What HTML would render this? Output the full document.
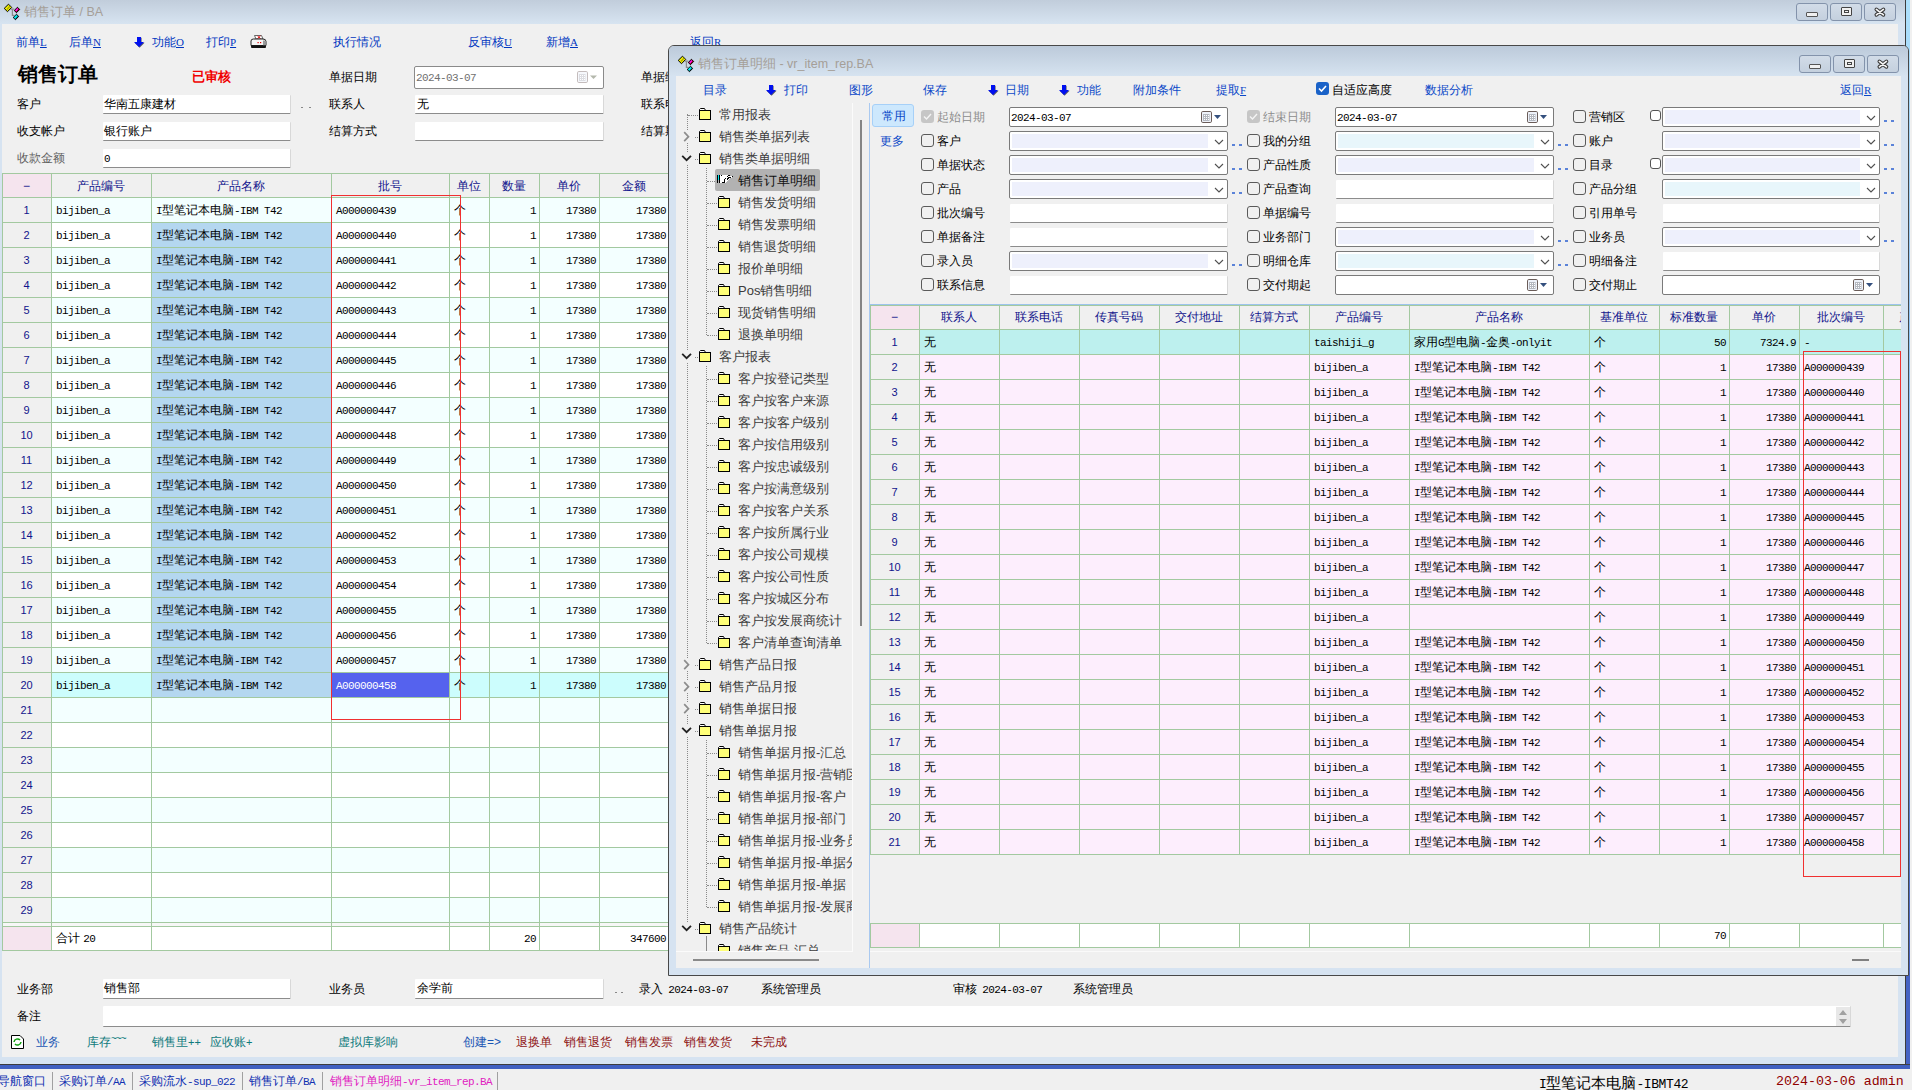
<!DOCTYPE html>
<html><head><meta charset="utf-8"><style>
*{margin:0;padding:0;box-sizing:border-box}
html,body{width:1912px;height:1090px;overflow:hidden;background:#f0f0f0;position:relative;font-family:"Liberation Sans",sans-serif;font-size:12px;color:#000}
div{position:absolute}
.t{white-space:nowrap;line-height:16px;font-size:12px}
.m{font-family:"Liberation Mono",monospace;font-size:11px;letter-spacing:-0.6px}
.lk{color:#0036c0}
.inp{background:#fff;border-bottom:1px solid #8c8c8c;border-right:1px solid #d8d8d8;border-radius:1px}
.btn{border:1px solid #8393ab;border-radius:3px;background:linear-gradient(#d2dce8,#c4d0de)}
.cb{width:13px;height:13px;border:1px solid #5a5a5a;border-radius:3px;background:transparent}
.cmb{background:#fff;border:1px solid #7a7a7a;border-radius:2px}
</style></head><body>
<div style="left:1906px;top:0px;width:4px;height:1069px;background:linear-gradient(#ade0fb,#80b8f8 45%,#4563c4 90%)"></div>
<div style="left:0px;top:1064px;width:1910px;height:5px;background:#4060c0;border-top:1px solid #404040"></div>
<div style="left:0px;top:0px;width:1906px;height:1065px;background:#d6e3f1;border-right:1px solid #3c3c3c;border-bottom:1px solid #3c3c3c"></div>
<div style="left:0px;top:0px;width:1905px;height:24px;background:linear-gradient(#c1cddb,#d7e4f1)"></div>
<svg style="position:absolute;left:0px;top:0px" width="22" height="22" viewBox="0 0 22 22"><path d="M10.8 9.2 H14.3 M12.4 9.2 V15.4 H14.3" stroke="#8c8c8c" stroke-width="1.2" fill="none"/><path d="M8.5 4.2 L11.7 7.4 L7.5 11.7 L4.2 8.4 Z" fill="#f0f000" stroke="#000" stroke-width="1"/><path d="M9.8 5.6 L10.5 6.6 L7.2 10 L6.4 9.2 Z" fill="#a8a000"/><path d="M17.5 7.3 L19.7 9.5 L16.4 12.7 L14.3 10.4 Z" fill="#a00010" stroke="#000" stroke-width="1"/><path d="M17.3 8 L15.2 10.4 L16.2 11.4 L18.4 9 Z" fill="#ff10ff"/><path d="M16.5 14.3 L18.7 16.4 L15.5 19.7 L13.2 17.5 Z" fill="#008890" stroke="#000" stroke-width="1"/><path d="M16.3 15 L14 17.5 L15 18.4 L17.3 16 Z" fill="#00ffff"/></svg>
<div class="t" style="left:24px;top:4px;font-size:12.5px;color:#a59f98">销售订单 / BA</div>
<div class="btn" style="left:1796px;top:3px;width:32px;height:18px;"></div>
<div style="left:1806px;top:12px;width:12px;height:5px;background:#f0f0f0;border:1px solid #555;border-radius:1px"></div>
<div class="btn" style="left:1830px;top:3px;width:32px;height:18px;"></div>
<div style="left:1841px;top:7px;width:11px;height:9px;background:#f0f0f0;border:1px solid #444;border-radius:1px"><div style="left:2px;top:2px;width:5px;height:3px;border:1px solid #444"></div></div>
<div class="btn" style="left:1864px;top:3px;width:32px;height:18px;"></div>
<svg style="position:absolute;left:1873px;top:6px" width="14" height="12" viewBox="0 0 14 12"><path d="M3.4 3.4 L10.4 8.8 M10.4 3.4 L3.4 8.8" stroke="#3a3a3a" stroke-width="3.8" stroke-linecap="round"/><path d="M3.4 3.4 L10.4 8.8 M10.4 3.4 L3.4 8.8" stroke="#f6f6f6" stroke-width="1.7" stroke-linecap="round"/></svg>
<div style="left:2px;top:24px;width:1896px;height:1033px;background:#f0f0f0"></div>
<div class="t" style="left:16px;top:34px;color:#0036c0">前单<span style="font-family:'Liberation Serif',serif;font-size:11px;text-decoration:underline">L</span></div>
<div class="t" style="left:69px;top:34px;color:#0036c0">后单<span style="font-family:'Liberation Serif',serif;font-size:11px;text-decoration:underline">N</span></div>
<div class="t" style="left:152px;top:34px;color:#0036c0">功能<span style="font-family:'Liberation Serif',serif;font-size:11px;text-decoration:underline">O</span></div>
<div class="t" style="left:206px;top:34px;color:#0036c0">打印<span style="font-family:'Liberation Serif',serif;font-size:11px;text-decoration:underline">P</span></div>
<div class="t" style="left:333px;top:34px;color:#0036c0">执行情况</div>
<div class="t" style="left:468px;top:34px;color:#0036c0">反审核<span style="font-family:'Liberation Serif',serif;font-size:11px;text-decoration:underline">U</span></div>
<div class="t" style="left:546px;top:34px;color:#0036c0">新增<span style="font-family:'Liberation Serif',serif;font-size:11px;text-decoration:underline">A</span></div>
<div class="t" style="left:690px;top:34px;color:#0036c0">返回<span style="font-family:'Liberation Serif',serif;font-size:11px;text-decoration:underline">R</span></div>
<svg style="position:absolute;left:133px;top:36px" width="12" height="12" viewBox="0 0 12 12"><path d="M4 1 H8 V6 H11 L6 11 L1 6 H4 Z" fill="#606060" transform="translate(0.6,0.8)"/><path d="M4 1 H8 V6 H11 L6 11 L1 6 H4 Z" fill="#0010f0"/></svg>
<svg style="position:absolute;left:250px;top:35px" width="17" height="14" viewBox="0 0 17 14"><path d="M4.5 0.5 H11.5 L13 4 H6 Z" fill="#fff" stroke="#444" stroke-width="0.8"/><path d="M7.5 1 L10.5 3.5 M10.5 1 L7.5 3.5" stroke="#e00000" stroke-width="0.9"/><path d="M1 6 Q1 4 3.5 4 H13 Q16 4 16 6.5 V10.5 H1 Z" fill="#f6f6f6" stroke="#222" stroke-width="1"/><rect x="13" y="5.5" width="2.5" height="5" fill="#9a9a9a"/><rect x="7.5" y="7" width="1.2" height="1.2" fill="#e00000"/><rect x="10" y="7" width="1.2" height="1.2" fill="#e00000"/><rect x="1" y="10.5" width="15" height="2.5" rx="1" fill="#111"/></svg>
<div class="t" style="left:18px;top:67px;font-family:'Liberation Serif',serif;font-size:20px;font-weight:bold;line-height:16px;top:66px">销售订单</div>
<div class="t" style="left:192px;top:69px;color:#f00000;font-weight:bold;font-size:13px">已审核</div>
<div class="t" style="left:329px;top:69px;">单据日期</div>
<div style="left:414px;top:66px;width:190px;height:23px;background:#fff;border:1px solid #8a8a8a;border-radius:2px"></div>
<div class="t" style="left:416px;top:69px;color:#707070"><span class=m>2024-03-07</span></div>
<svg style="position:absolute;left:577px;top:71px" width="24" height="13" viewBox="0 0 24 13"><rect x="0.5" y="0.5" width="10" height="11" rx="1.3" fill="#f6f8fc" stroke="#c4bcbc"/><rect x="2" y="3" width="6.5" height="7" fill="#dcdde2"/><path d="M3 4h1v1h-1zM5 4h1v1h-1zM7 4h1v1h-1zM3 6h1v1h-1zM5 6h1v1h-1zM7 6h1v1h-1zM3 8h1v1h-1zM5 8h1v1h-1zM7 8h1v1h-1z" fill="#fff"/><path d="M13 4.5 L20 4.5 L16.5 8 Z" fill="#b4b8ac"/></svg>
<div class="t" style="left:641px;top:69px;">单据编</div>
<div class="t" style="left:17px;top:96px;">客户</div>
<div class="inp" style="left:103px;top:95px;width:188px;height:19px;"></div>
<div class="t" style="left:104px;top:96px;">华南五康建材</div>
<div style="left:301px;top:107px;width:2px;height:1px;background:#888"></div>
<div style="left:309px;top:107px;width:2px;height:1px;background:#888"></div>
<div class="t" style="left:329px;top:96px;">联系人</div>
<div class="inp" style="left:415px;top:95px;width:189px;height:19px;"></div>
<div class="t" style="left:417px;top:96px;">无</div>
<div class="t" style="left:641px;top:96px;">联系电</div>
<div class="t" style="left:17px;top:123px;">收支帐户</div>
<div class="inp" style="left:103px;top:122px;width:188px;height:19px;"></div>
<div class="t" style="left:104px;top:123px;">银行账户</div>
<div class="t" style="left:329px;top:123px;">结算方式</div>
<div class="inp" style="left:415px;top:122px;width:189px;height:19px;"></div>
<div class="t" style="left:641px;top:123px;">结算期</div>
<div class="t" style="left:17px;top:150px;color:#606060">收款金额</div>
<div class="inp" style="left:103px;top:149px;width:188px;height:19px;"></div>
<div class="t" style="left:104px;top:150px;"><span class=m>0</span></div>
<div style="left:2px;top:173px;width:698px;height:24px;background:#f0f0f0"></div>
<div style="left:2px;top:173px;width:49px;height:24px;background:#f5e4ee"></div>
<div style="left:2px;top:198px;width:698px;height:24px;background:#f3ffff"></div>
<div style="left:2px;top:198px;width:49px;height:24px;background:#f0f0f0"></div>
<div style="left:2px;top:223px;width:698px;height:24px;background:#ffffff"></div>
<div style="left:2px;top:223px;width:49px;height:24px;background:#f0f0f0"></div>
<div style="left:152px;top:223px;width:179px;height:24px;background:#b4d7f0"></div>
<div style="left:2px;top:248px;width:698px;height:24px;background:#f3ffff"></div>
<div style="left:2px;top:248px;width:49px;height:24px;background:#f0f0f0"></div>
<div style="left:152px;top:248px;width:179px;height:24px;background:#b4d7f0"></div>
<div style="left:2px;top:273px;width:698px;height:24px;background:#ffffff"></div>
<div style="left:2px;top:273px;width:49px;height:24px;background:#f0f0f0"></div>
<div style="left:152px;top:273px;width:179px;height:24px;background:#b4d7f0"></div>
<div style="left:2px;top:298px;width:698px;height:24px;background:#f3ffff"></div>
<div style="left:2px;top:298px;width:49px;height:24px;background:#f0f0f0"></div>
<div style="left:152px;top:298px;width:179px;height:24px;background:#b4d7f0"></div>
<div style="left:2px;top:323px;width:698px;height:24px;background:#ffffff"></div>
<div style="left:2px;top:323px;width:49px;height:24px;background:#f0f0f0"></div>
<div style="left:152px;top:323px;width:179px;height:24px;background:#b4d7f0"></div>
<div style="left:2px;top:348px;width:698px;height:24px;background:#f3ffff"></div>
<div style="left:2px;top:348px;width:49px;height:24px;background:#f0f0f0"></div>
<div style="left:152px;top:348px;width:179px;height:24px;background:#b4d7f0"></div>
<div style="left:2px;top:373px;width:698px;height:24px;background:#ffffff"></div>
<div style="left:2px;top:373px;width:49px;height:24px;background:#f0f0f0"></div>
<div style="left:152px;top:373px;width:179px;height:24px;background:#b4d7f0"></div>
<div style="left:2px;top:398px;width:698px;height:24px;background:#f3ffff"></div>
<div style="left:2px;top:398px;width:49px;height:24px;background:#f0f0f0"></div>
<div style="left:152px;top:398px;width:179px;height:24px;background:#b4d7f0"></div>
<div style="left:2px;top:423px;width:698px;height:24px;background:#ffffff"></div>
<div style="left:2px;top:423px;width:49px;height:24px;background:#f0f0f0"></div>
<div style="left:152px;top:423px;width:179px;height:24px;background:#b4d7f0"></div>
<div style="left:2px;top:448px;width:698px;height:24px;background:#f3ffff"></div>
<div style="left:2px;top:448px;width:49px;height:24px;background:#f0f0f0"></div>
<div style="left:152px;top:448px;width:179px;height:24px;background:#b4d7f0"></div>
<div style="left:2px;top:473px;width:698px;height:24px;background:#ffffff"></div>
<div style="left:2px;top:473px;width:49px;height:24px;background:#f0f0f0"></div>
<div style="left:152px;top:473px;width:179px;height:24px;background:#b4d7f0"></div>
<div style="left:2px;top:498px;width:698px;height:24px;background:#f3ffff"></div>
<div style="left:2px;top:498px;width:49px;height:24px;background:#f0f0f0"></div>
<div style="left:152px;top:498px;width:179px;height:24px;background:#b4d7f0"></div>
<div style="left:2px;top:523px;width:698px;height:24px;background:#ffffff"></div>
<div style="left:2px;top:523px;width:49px;height:24px;background:#f0f0f0"></div>
<div style="left:152px;top:523px;width:179px;height:24px;background:#b4d7f0"></div>
<div style="left:2px;top:548px;width:698px;height:24px;background:#f3ffff"></div>
<div style="left:2px;top:548px;width:49px;height:24px;background:#f0f0f0"></div>
<div style="left:152px;top:548px;width:179px;height:24px;background:#b4d7f0"></div>
<div style="left:2px;top:573px;width:698px;height:24px;background:#ffffff"></div>
<div style="left:2px;top:573px;width:49px;height:24px;background:#f0f0f0"></div>
<div style="left:152px;top:573px;width:179px;height:24px;background:#b4d7f0"></div>
<div style="left:2px;top:598px;width:698px;height:24px;background:#f3ffff"></div>
<div style="left:2px;top:598px;width:49px;height:24px;background:#f0f0f0"></div>
<div style="left:152px;top:598px;width:179px;height:24px;background:#b4d7f0"></div>
<div style="left:2px;top:623px;width:698px;height:24px;background:#ffffff"></div>
<div style="left:2px;top:623px;width:49px;height:24px;background:#f0f0f0"></div>
<div style="left:152px;top:623px;width:179px;height:24px;background:#b4d7f0"></div>
<div style="left:2px;top:648px;width:698px;height:24px;background:#f3ffff"></div>
<div style="left:2px;top:648px;width:49px;height:24px;background:#f0f0f0"></div>
<div style="left:152px;top:648px;width:179px;height:24px;background:#b4d7f0"></div>
<div style="left:2px;top:673px;width:698px;height:24px;background:#ccfdfd"></div>
<div style="left:2px;top:673px;width:49px;height:24px;background:#f0f0f0"></div>
<div style="left:152px;top:673px;width:179px;height:24px;background:#b4d7f0"></div>
<div style="left:2px;top:698px;width:698px;height:24px;background:#f3ffff"></div>
<div style="left:2px;top:698px;width:49px;height:24px;background:#f0f0f0"></div>
<div style="left:2px;top:723px;width:698px;height:24px;background:#ffffff"></div>
<div style="left:2px;top:723px;width:49px;height:24px;background:#f0f0f0"></div>
<div style="left:2px;top:748px;width:698px;height:24px;background:#f3ffff"></div>
<div style="left:2px;top:748px;width:49px;height:24px;background:#f0f0f0"></div>
<div style="left:2px;top:773px;width:698px;height:24px;background:#ffffff"></div>
<div style="left:2px;top:773px;width:49px;height:24px;background:#f0f0f0"></div>
<div style="left:2px;top:798px;width:698px;height:24px;background:#f3ffff"></div>
<div style="left:2px;top:798px;width:49px;height:24px;background:#f0f0f0"></div>
<div style="left:2px;top:823px;width:698px;height:24px;background:#ffffff"></div>
<div style="left:2px;top:823px;width:49px;height:24px;background:#f0f0f0"></div>
<div style="left:2px;top:848px;width:698px;height:24px;background:#f3ffff"></div>
<div style="left:2px;top:848px;width:49px;height:24px;background:#f0f0f0"></div>
<div style="left:2px;top:873px;width:698px;height:24px;background:#ffffff"></div>
<div style="left:2px;top:873px;width:49px;height:24px;background:#f0f0f0"></div>
<div style="left:2px;top:898px;width:698px;height:24px;background:#f3ffff"></div>
<div style="left:2px;top:898px;width:49px;height:24px;background:#f0f0f0"></div>
<div style="left:332px;top:673px;width:117px;height:24px;background:#5562ee"></div>
<div style="left:2px;top:923px;width:698px;height:3px;background:#f7f7f7"></div>
<div style="left:2px;top:927px;width:698px;height:23px;background:#fff"></div>
<div style="left:2px;top:927px;width:49px;height:23px;background:#f5e4ee"></div>
<div style="left:2px;top:173px;width:698px;height:1px;background:#a3c9a0"></div>
<div style="left:2px;top:197px;width:698px;height:1px;background:#a3c9a0"></div>
<div style="left:2px;top:222px;width:698px;height:1px;background:#a3c9a0"></div>
<div style="left:2px;top:247px;width:698px;height:1px;background:#a3c9a0"></div>
<div style="left:2px;top:272px;width:698px;height:1px;background:#a3c9a0"></div>
<div style="left:2px;top:297px;width:698px;height:1px;background:#a3c9a0"></div>
<div style="left:2px;top:322px;width:698px;height:1px;background:#a3c9a0"></div>
<div style="left:2px;top:347px;width:698px;height:1px;background:#a3c9a0"></div>
<div style="left:2px;top:372px;width:698px;height:1px;background:#a3c9a0"></div>
<div style="left:2px;top:397px;width:698px;height:1px;background:#a3c9a0"></div>
<div style="left:2px;top:422px;width:698px;height:1px;background:#a3c9a0"></div>
<div style="left:2px;top:447px;width:698px;height:1px;background:#a3c9a0"></div>
<div style="left:2px;top:472px;width:698px;height:1px;background:#a3c9a0"></div>
<div style="left:2px;top:497px;width:698px;height:1px;background:#a3c9a0"></div>
<div style="left:2px;top:522px;width:698px;height:1px;background:#a3c9a0"></div>
<div style="left:2px;top:547px;width:698px;height:1px;background:#a3c9a0"></div>
<div style="left:2px;top:572px;width:698px;height:1px;background:#a3c9a0"></div>
<div style="left:2px;top:597px;width:698px;height:1px;background:#a3c9a0"></div>
<div style="left:2px;top:622px;width:698px;height:1px;background:#a3c9a0"></div>
<div style="left:2px;top:647px;width:698px;height:1px;background:#a3c9a0"></div>
<div style="left:2px;top:672px;width:698px;height:1px;background:#a3c9a0"></div>
<div style="left:2px;top:697px;width:698px;height:1px;background:#a3c9a0"></div>
<div style="left:2px;top:722px;width:698px;height:1px;background:#a3c9a0"></div>
<div style="left:2px;top:747px;width:698px;height:1px;background:#a3c9a0"></div>
<div style="left:2px;top:772px;width:698px;height:1px;background:#a3c9a0"></div>
<div style="left:2px;top:797px;width:698px;height:1px;background:#a3c9a0"></div>
<div style="left:2px;top:822px;width:698px;height:1px;background:#a3c9a0"></div>
<div style="left:2px;top:847px;width:698px;height:1px;background:#a3c9a0"></div>
<div style="left:2px;top:872px;width:698px;height:1px;background:#a3c9a0"></div>
<div style="left:2px;top:897px;width:698px;height:1px;background:#a3c9a0"></div>
<div style="left:2px;top:922px;width:698px;height:1px;background:#a3c9a0"></div>
<div style="left:2px;top:926px;width:698px;height:1px;background:#a3c9a0"></div>
<div style="left:2px;top:950px;width:698px;height:1px;background:#a3c9a0"></div>
<div style="left:2px;top:173px;width:1px;height:778px;background:#a3c9a0"></div>
<div style="left:51px;top:173px;width:1px;height:778px;background:#a3c9a0"></div>
<div style="left:151px;top:173px;width:1px;height:778px;background:#a3c9a0"></div>
<div style="left:331px;top:173px;width:1px;height:778px;background:#a3c9a0"></div>
<div style="left:449px;top:173px;width:1px;height:778px;background:#a3c9a0"></div>
<div style="left:489px;top:173px;width:1px;height:778px;background:#a3c9a0"></div>
<div style="left:539px;top:173px;width:1px;height:778px;background:#a3c9a0"></div>
<div style="left:599px;top:173px;width:1px;height:778px;background:#a3c9a0"></div>
<div class="t" style="left:2px;width:49px;text-align:center;top:178px;color:#10148c">−</div>
<div class="t" style="left:51px;width:100px;text-align:center;top:178px;color:#10148c">产品编号</div>
<div class="t" style="left:151px;width:180px;text-align:center;top:178px;color:#10148c">产品名称</div>
<div class="t" style="left:331px;width:118px;text-align:center;top:178px;color:#10148c">批号</div>
<div class="t" style="left:449px;width:40px;text-align:center;top:178px;color:#10148c">单位</div>
<div class="t" style="left:489px;width:50px;text-align:center;top:178px;color:#10148c">数量</div>
<div class="t" style="left:539px;width:60px;text-align:center;top:178px;color:#10148c">单价</div>
<div class="t" style="left:599px;width:69px;text-align:center;top:178px;color:#10148c">金额</div>
<div class="t" style="left:599px;width:69px;text-align:center;top:178px;color:#10148c;display:none">金额</div>
<div class="t" style="left:2px;width:49px;text-align:center;top:202px;color:#10148c;font-size:11px">1</div>
<div class="t" style="left:56px;top:202px;"><span class=m>bijiben_a</span></div>
<div class="t" style="left:156px;top:202px;"><span class=m>I</span>型笔记本电脑<span class=m>-IBM&nbsp;T42</span></div>
<div class="t" style="left:336px;top:202px;color:#000"><span class=m>A000000439</span></div>
<div class="t" style="left:454px;top:202px;">个</div>
<div class="t" style="right:1376px;top:202px;"><span class=m>1</span></div>
<div class="t" style="right:1316px;top:202px;"><span class=m>17380</span></div>
<div class="t" style="right:1246px;top:202px;"><span class=m>17380</span></div>
<div class="t" style="left:2px;width:49px;text-align:center;top:227px;color:#10148c;font-size:11px">2</div>
<div class="t" style="left:56px;top:227px;"><span class=m>bijiben_a</span></div>
<div class="t" style="left:156px;top:227px;"><span class=m>I</span>型笔记本电脑<span class=m>-IBM&nbsp;T42</span></div>
<div class="t" style="left:336px;top:227px;color:#000"><span class=m>A000000440</span></div>
<div class="t" style="left:454px;top:227px;">个</div>
<div class="t" style="right:1376px;top:227px;"><span class=m>1</span></div>
<div class="t" style="right:1316px;top:227px;"><span class=m>17380</span></div>
<div class="t" style="right:1246px;top:227px;"><span class=m>17380</span></div>
<div class="t" style="left:2px;width:49px;text-align:center;top:252px;color:#10148c;font-size:11px">3</div>
<div class="t" style="left:56px;top:252px;"><span class=m>bijiben_a</span></div>
<div class="t" style="left:156px;top:252px;"><span class=m>I</span>型笔记本电脑<span class=m>-IBM&nbsp;T42</span></div>
<div class="t" style="left:336px;top:252px;color:#000"><span class=m>A000000441</span></div>
<div class="t" style="left:454px;top:252px;">个</div>
<div class="t" style="right:1376px;top:252px;"><span class=m>1</span></div>
<div class="t" style="right:1316px;top:252px;"><span class=m>17380</span></div>
<div class="t" style="right:1246px;top:252px;"><span class=m>17380</span></div>
<div class="t" style="left:2px;width:49px;text-align:center;top:277px;color:#10148c;font-size:11px">4</div>
<div class="t" style="left:56px;top:277px;"><span class=m>bijiben_a</span></div>
<div class="t" style="left:156px;top:277px;"><span class=m>I</span>型笔记本电脑<span class=m>-IBM&nbsp;T42</span></div>
<div class="t" style="left:336px;top:277px;color:#000"><span class=m>A000000442</span></div>
<div class="t" style="left:454px;top:277px;">个</div>
<div class="t" style="right:1376px;top:277px;"><span class=m>1</span></div>
<div class="t" style="right:1316px;top:277px;"><span class=m>17380</span></div>
<div class="t" style="right:1246px;top:277px;"><span class=m>17380</span></div>
<div class="t" style="left:2px;width:49px;text-align:center;top:302px;color:#10148c;font-size:11px">5</div>
<div class="t" style="left:56px;top:302px;"><span class=m>bijiben_a</span></div>
<div class="t" style="left:156px;top:302px;"><span class=m>I</span>型笔记本电脑<span class=m>-IBM&nbsp;T42</span></div>
<div class="t" style="left:336px;top:302px;color:#000"><span class=m>A000000443</span></div>
<div class="t" style="left:454px;top:302px;">个</div>
<div class="t" style="right:1376px;top:302px;"><span class=m>1</span></div>
<div class="t" style="right:1316px;top:302px;"><span class=m>17380</span></div>
<div class="t" style="right:1246px;top:302px;"><span class=m>17380</span></div>
<div class="t" style="left:2px;width:49px;text-align:center;top:327px;color:#10148c;font-size:11px">6</div>
<div class="t" style="left:56px;top:327px;"><span class=m>bijiben_a</span></div>
<div class="t" style="left:156px;top:327px;"><span class=m>I</span>型笔记本电脑<span class=m>-IBM&nbsp;T42</span></div>
<div class="t" style="left:336px;top:327px;color:#000"><span class=m>A000000444</span></div>
<div class="t" style="left:454px;top:327px;">个</div>
<div class="t" style="right:1376px;top:327px;"><span class=m>1</span></div>
<div class="t" style="right:1316px;top:327px;"><span class=m>17380</span></div>
<div class="t" style="right:1246px;top:327px;"><span class=m>17380</span></div>
<div class="t" style="left:2px;width:49px;text-align:center;top:352px;color:#10148c;font-size:11px">7</div>
<div class="t" style="left:56px;top:352px;"><span class=m>bijiben_a</span></div>
<div class="t" style="left:156px;top:352px;"><span class=m>I</span>型笔记本电脑<span class=m>-IBM&nbsp;T42</span></div>
<div class="t" style="left:336px;top:352px;color:#000"><span class=m>A000000445</span></div>
<div class="t" style="left:454px;top:352px;">个</div>
<div class="t" style="right:1376px;top:352px;"><span class=m>1</span></div>
<div class="t" style="right:1316px;top:352px;"><span class=m>17380</span></div>
<div class="t" style="right:1246px;top:352px;"><span class=m>17380</span></div>
<div class="t" style="left:2px;width:49px;text-align:center;top:377px;color:#10148c;font-size:11px">8</div>
<div class="t" style="left:56px;top:377px;"><span class=m>bijiben_a</span></div>
<div class="t" style="left:156px;top:377px;"><span class=m>I</span>型笔记本电脑<span class=m>-IBM&nbsp;T42</span></div>
<div class="t" style="left:336px;top:377px;color:#000"><span class=m>A000000446</span></div>
<div class="t" style="left:454px;top:377px;">个</div>
<div class="t" style="right:1376px;top:377px;"><span class=m>1</span></div>
<div class="t" style="right:1316px;top:377px;"><span class=m>17380</span></div>
<div class="t" style="right:1246px;top:377px;"><span class=m>17380</span></div>
<div class="t" style="left:2px;width:49px;text-align:center;top:402px;color:#10148c;font-size:11px">9</div>
<div class="t" style="left:56px;top:402px;"><span class=m>bijiben_a</span></div>
<div class="t" style="left:156px;top:402px;"><span class=m>I</span>型笔记本电脑<span class=m>-IBM&nbsp;T42</span></div>
<div class="t" style="left:336px;top:402px;color:#000"><span class=m>A000000447</span></div>
<div class="t" style="left:454px;top:402px;">个</div>
<div class="t" style="right:1376px;top:402px;"><span class=m>1</span></div>
<div class="t" style="right:1316px;top:402px;"><span class=m>17380</span></div>
<div class="t" style="right:1246px;top:402px;"><span class=m>17380</span></div>
<div class="t" style="left:2px;width:49px;text-align:center;top:427px;color:#10148c;font-size:11px">10</div>
<div class="t" style="left:56px;top:427px;"><span class=m>bijiben_a</span></div>
<div class="t" style="left:156px;top:427px;"><span class=m>I</span>型笔记本电脑<span class=m>-IBM&nbsp;T42</span></div>
<div class="t" style="left:336px;top:427px;color:#000"><span class=m>A000000448</span></div>
<div class="t" style="left:454px;top:427px;">个</div>
<div class="t" style="right:1376px;top:427px;"><span class=m>1</span></div>
<div class="t" style="right:1316px;top:427px;"><span class=m>17380</span></div>
<div class="t" style="right:1246px;top:427px;"><span class=m>17380</span></div>
<div class="t" style="left:2px;width:49px;text-align:center;top:452px;color:#10148c;font-size:11px">11</div>
<div class="t" style="left:56px;top:452px;"><span class=m>bijiben_a</span></div>
<div class="t" style="left:156px;top:452px;"><span class=m>I</span>型笔记本电脑<span class=m>-IBM&nbsp;T42</span></div>
<div class="t" style="left:336px;top:452px;color:#000"><span class=m>A000000449</span></div>
<div class="t" style="left:454px;top:452px;">个</div>
<div class="t" style="right:1376px;top:452px;"><span class=m>1</span></div>
<div class="t" style="right:1316px;top:452px;"><span class=m>17380</span></div>
<div class="t" style="right:1246px;top:452px;"><span class=m>17380</span></div>
<div class="t" style="left:2px;width:49px;text-align:center;top:477px;color:#10148c;font-size:11px">12</div>
<div class="t" style="left:56px;top:477px;"><span class=m>bijiben_a</span></div>
<div class="t" style="left:156px;top:477px;"><span class=m>I</span>型笔记本电脑<span class=m>-IBM&nbsp;T42</span></div>
<div class="t" style="left:336px;top:477px;color:#000"><span class=m>A000000450</span></div>
<div class="t" style="left:454px;top:477px;">个</div>
<div class="t" style="right:1376px;top:477px;"><span class=m>1</span></div>
<div class="t" style="right:1316px;top:477px;"><span class=m>17380</span></div>
<div class="t" style="right:1246px;top:477px;"><span class=m>17380</span></div>
<div class="t" style="left:2px;width:49px;text-align:center;top:502px;color:#10148c;font-size:11px">13</div>
<div class="t" style="left:56px;top:502px;"><span class=m>bijiben_a</span></div>
<div class="t" style="left:156px;top:502px;"><span class=m>I</span>型笔记本电脑<span class=m>-IBM&nbsp;T42</span></div>
<div class="t" style="left:336px;top:502px;color:#000"><span class=m>A000000451</span></div>
<div class="t" style="left:454px;top:502px;">个</div>
<div class="t" style="right:1376px;top:502px;"><span class=m>1</span></div>
<div class="t" style="right:1316px;top:502px;"><span class=m>17380</span></div>
<div class="t" style="right:1246px;top:502px;"><span class=m>17380</span></div>
<div class="t" style="left:2px;width:49px;text-align:center;top:527px;color:#10148c;font-size:11px">14</div>
<div class="t" style="left:56px;top:527px;"><span class=m>bijiben_a</span></div>
<div class="t" style="left:156px;top:527px;"><span class=m>I</span>型笔记本电脑<span class=m>-IBM&nbsp;T42</span></div>
<div class="t" style="left:336px;top:527px;color:#000"><span class=m>A000000452</span></div>
<div class="t" style="left:454px;top:527px;">个</div>
<div class="t" style="right:1376px;top:527px;"><span class=m>1</span></div>
<div class="t" style="right:1316px;top:527px;"><span class=m>17380</span></div>
<div class="t" style="right:1246px;top:527px;"><span class=m>17380</span></div>
<div class="t" style="left:2px;width:49px;text-align:center;top:552px;color:#10148c;font-size:11px">15</div>
<div class="t" style="left:56px;top:552px;"><span class=m>bijiben_a</span></div>
<div class="t" style="left:156px;top:552px;"><span class=m>I</span>型笔记本电脑<span class=m>-IBM&nbsp;T42</span></div>
<div class="t" style="left:336px;top:552px;color:#000"><span class=m>A000000453</span></div>
<div class="t" style="left:454px;top:552px;">个</div>
<div class="t" style="right:1376px;top:552px;"><span class=m>1</span></div>
<div class="t" style="right:1316px;top:552px;"><span class=m>17380</span></div>
<div class="t" style="right:1246px;top:552px;"><span class=m>17380</span></div>
<div class="t" style="left:2px;width:49px;text-align:center;top:577px;color:#10148c;font-size:11px">16</div>
<div class="t" style="left:56px;top:577px;"><span class=m>bijiben_a</span></div>
<div class="t" style="left:156px;top:577px;"><span class=m>I</span>型笔记本电脑<span class=m>-IBM&nbsp;T42</span></div>
<div class="t" style="left:336px;top:577px;color:#000"><span class=m>A000000454</span></div>
<div class="t" style="left:454px;top:577px;">个</div>
<div class="t" style="right:1376px;top:577px;"><span class=m>1</span></div>
<div class="t" style="right:1316px;top:577px;"><span class=m>17380</span></div>
<div class="t" style="right:1246px;top:577px;"><span class=m>17380</span></div>
<div class="t" style="left:2px;width:49px;text-align:center;top:602px;color:#10148c;font-size:11px">17</div>
<div class="t" style="left:56px;top:602px;"><span class=m>bijiben_a</span></div>
<div class="t" style="left:156px;top:602px;"><span class=m>I</span>型笔记本电脑<span class=m>-IBM&nbsp;T42</span></div>
<div class="t" style="left:336px;top:602px;color:#000"><span class=m>A000000455</span></div>
<div class="t" style="left:454px;top:602px;">个</div>
<div class="t" style="right:1376px;top:602px;"><span class=m>1</span></div>
<div class="t" style="right:1316px;top:602px;"><span class=m>17380</span></div>
<div class="t" style="right:1246px;top:602px;"><span class=m>17380</span></div>
<div class="t" style="left:2px;width:49px;text-align:center;top:627px;color:#10148c;font-size:11px">18</div>
<div class="t" style="left:56px;top:627px;"><span class=m>bijiben_a</span></div>
<div class="t" style="left:156px;top:627px;"><span class=m>I</span>型笔记本电脑<span class=m>-IBM&nbsp;T42</span></div>
<div class="t" style="left:336px;top:627px;color:#000"><span class=m>A000000456</span></div>
<div class="t" style="left:454px;top:627px;">个</div>
<div class="t" style="right:1376px;top:627px;"><span class=m>1</span></div>
<div class="t" style="right:1316px;top:627px;"><span class=m>17380</span></div>
<div class="t" style="right:1246px;top:627px;"><span class=m>17380</span></div>
<div class="t" style="left:2px;width:49px;text-align:center;top:652px;color:#10148c;font-size:11px">19</div>
<div class="t" style="left:56px;top:652px;"><span class=m>bijiben_a</span></div>
<div class="t" style="left:156px;top:652px;"><span class=m>I</span>型笔记本电脑<span class=m>-IBM&nbsp;T42</span></div>
<div class="t" style="left:336px;top:652px;color:#000"><span class=m>A000000457</span></div>
<div class="t" style="left:454px;top:652px;">个</div>
<div class="t" style="right:1376px;top:652px;"><span class=m>1</span></div>
<div class="t" style="right:1316px;top:652px;"><span class=m>17380</span></div>
<div class="t" style="right:1246px;top:652px;"><span class=m>17380</span></div>
<div class="t" style="left:2px;width:49px;text-align:center;top:677px;color:#10148c;font-size:11px">20</div>
<div class="t" style="left:56px;top:677px;"><span class=m>bijiben_a</span></div>
<div class="t" style="left:156px;top:677px;"><span class=m>I</span>型笔记本电脑<span class=m>-IBM&nbsp;T42</span></div>
<div class="t" style="left:336px;top:677px;color:#fff"><span class=m>A000000458</span></div>
<div class="t" style="left:454px;top:677px;">个</div>
<div class="t" style="right:1376px;top:677px;"><span class=m>1</span></div>
<div class="t" style="right:1316px;top:677px;"><span class=m>17380</span></div>
<div class="t" style="right:1246px;top:677px;"><span class=m>17380</span></div>
<div class="t" style="left:2px;width:49px;text-align:center;top:702px;color:#10148c;font-size:11px">21</div>
<div class="t" style="left:2px;width:49px;text-align:center;top:727px;color:#10148c;font-size:11px">22</div>
<div class="t" style="left:2px;width:49px;text-align:center;top:752px;color:#10148c;font-size:11px">23</div>
<div class="t" style="left:2px;width:49px;text-align:center;top:777px;color:#10148c;font-size:11px">24</div>
<div class="t" style="left:2px;width:49px;text-align:center;top:802px;color:#10148c;font-size:11px">25</div>
<div class="t" style="left:2px;width:49px;text-align:center;top:827px;color:#10148c;font-size:11px">26</div>
<div class="t" style="left:2px;width:49px;text-align:center;top:852px;color:#10148c;font-size:11px">27</div>
<div class="t" style="left:2px;width:49px;text-align:center;top:877px;color:#10148c;font-size:11px">28</div>
<div class="t" style="left:2px;width:49px;text-align:center;top:902px;color:#10148c;font-size:11px">29</div>
<div class="t" style="left:56px;top:930px;">合计 <span class=m>20</span></div>
<div class="t" style="right:1376px;top:930px;"><span class=m>20</span></div>
<div class="t" style="right:1246px;top:930px;"><span class=m>347600</span></div>
<div style="left:331px;top:195px;width:130px;height:525px;border:1px solid #f03030"></div>
<div class="t" style="left:17px;top:981px;">业务部</div>
<div class="inp" style="left:103px;top:979px;width:188px;height:20px;"></div>
<div class="t" style="left:104px;top:980px;">销售部</div>
<div class="t" style="left:329px;top:981px;">业务员</div>
<div class="inp" style="left:415px;top:979px;width:189px;height:20px;"></div>
<div class="t" style="left:417px;top:980px;">余学前</div>
<div style="left:615px;top:992px;width:2px;height:1px;background:#888"></div>
<div style="left:621px;top:992px;width:2px;height:1px;background:#888"></div>
<div class="t" style="left:639px;top:981px;">录入 <span class=m style="margin-left:2px">2024-03-07</span></div>
<div class="t" style="left:761px;top:981px;">系统管理员</div>
<div class="t" style="left:953px;top:981px;">审核 <span class=m style="margin-left:2px">2024-03-07</span></div>
<div class="t" style="left:1073px;top:981px;">系统管理员</div>
<div class="t" style="left:17px;top:1008px;">备注</div>
<div class="inp" style="left:103px;top:1006px;width:1748px;height:21px;"></div>
<div style="left:1836px;top:1007px;width:14px;height:19px;background:#e8e8e8"></div>
<svg style="position:absolute;left:1838px;top:1009px" width="10" height="16" viewBox="0 0 10 16"><path d="M1 6 L5 1 L9 6 Z M1 10 L9 10 L5 15 Z" fill="#a0a0a0"/></svg>
<svg style="position:absolute;left:10px;top:1034px" width="15" height="16" viewBox="0 0 15 16"><path d="M1.5 1.5 H10 L13.5 5 V14.5 H1.5 Z" fill="#fff" stroke="#000"/><path d="M4 8 A3.5 3.5 0 0 1 10 6 M11 8 A3.5 3.5 0 0 1 5 10" stroke="#10a010" stroke-width="1.5" fill="none"/></svg>
<div class="t" style="left:36px;top:1034px;color:#1a56b4">业务</div>
<div class="t" style="left:87px;top:1034px;color:#0e7a7c">库存<span style="font-size:10px;position:relative;top:-4px;letter-spacing:-1px">~~~</span></div>
<div class="t" style="left:152px;top:1034px;color:#0e7a7c">销售里<span style="font-size:11px">++</span></div>
<div class="t" style="left:210px;top:1034px;color:#0e7a7c">应收账<span style="font-size:11px">+</span></div>
<div class="t" style="left:338px;top:1034px;color:#0e7a7c">虚拟库影响</div>
<div class="t" style="left:463px;top:1034px;color:#1a56b4">创建=&gt;</div>
<div class="t" style="left:516px;top:1034px;color:#8e1212">退换单</div>
<div class="t" style="left:564px;top:1034px;color:#8e1212">销售退货</div>
<div class="t" style="left:625px;top:1034px;color:#8e1212">销售发票</div>
<div class="t" style="left:684px;top:1034px;color:#8e1212">销售发货</div>
<div class="t" style="left:751px;top:1034px;color:#8e1212">未完成</div>
<div class="t" style="left:-2px;top:1073px;color:#1030b0">导航窗口</div>
<div class="t" style="left:59px;top:1073px;color:#1030b0">采购订单<span class=m>/AA</span></div>
<div class="t" style="left:139px;top:1073px;color:#1030b0">采购流水<span class=m>-sup_022</span></div>
<div class="t" style="left:249px;top:1073px;color:#1030b0">销售订单<span class=m>/BA</span></div>
<div class="t" style="left:330px;top:1073px;color:#e020c0">销售订单明细<span class=m>-vr_item_rep.BA</span></div>
<div style="left:52px;top:1072px;width:1px;height:18px;background:#a0a0a0"></div>
<div style="left:132px;top:1072px;width:1px;height:18px;background:#a0a0a0"></div>
<div style="left:242px;top:1072px;width:1px;height:18px;background:#a0a0a0"></div>
<div style="left:322px;top:1072px;width:1px;height:18px;background:#a0a0a0"></div>
<div style="left:497px;top:1072px;width:1px;height:18px;background:#a0a0a0"></div>
<div class="t" style="left:1539px;top:1075px;font-size:15px"><span class=m style="font-size:13px;letter-spacing:-0.4px">I</span>型笔记本电脑<span class=m style="font-size:13px;letter-spacing:-0.4px">-IBMT42</span></div>
<div class="t" style="left:1776px;top:1073px;color:#900000"><span class=m style="font-size:13.3px;letter-spacing:0">2024-03-06 admin</span></div>
<div style="left:668px;top:45px;width:1241px;height:931px;background:#d6e3f1;border:1px solid #484848;border-radius:6px 6px 0 0"></div>
<div style="left:669px;top:46px;width:1239px;height:30px;background:linear-gradient(#bccada,#d6e3f0);border-radius:5px 5px 0 0"></div>
<svg style="position:absolute;left:674px;top:52px" width="22" height="22" viewBox="0 0 22 22"><path d="M10.8 9.2 H14.3 M12.4 9.2 V15.4 H14.3" stroke="#8c8c8c" stroke-width="1.2" fill="none"/><path d="M8.5 4.2 L11.7 7.4 L7.5 11.7 L4.2 8.4 Z" fill="#f0f000" stroke="#000" stroke-width="1"/><path d="M9.8 5.6 L10.5 6.6 L7.2 10 L6.4 9.2 Z" fill="#a8a000"/><path d="M17.5 7.3 L19.7 9.5 L16.4 12.7 L14.3 10.4 Z" fill="#a00010" stroke="#000" stroke-width="1"/><path d="M17.3 8 L15.2 10.4 L16.2 11.4 L18.4 9 Z" fill="#ff10ff"/><path d="M16.5 14.3 L18.7 16.4 L15.5 19.7 L13.2 17.5 Z" fill="#008890" stroke="#000" stroke-width="1"/><path d="M16.3 15 L14 17.5 L15 18.4 L17.3 16 Z" fill="#00ffff"/></svg>
<div class="t" style="left:698px;top:56px;font-size:12.5px;color:#a59f98">销售订单明细 - vr_item_rep.BA</div>
<div class="btn" style="left:1799px;top:55px;width:32px;height:18px;"></div>
<div style="left:1809px;top:64px;width:12px;height:5px;background:#f0f0f0;border:1px solid #555;border-radius:1px"></div>
<div class="btn" style="left:1833px;top:55px;width:32px;height:18px;"></div>
<div style="left:1844px;top:59px;width:11px;height:9px;background:#f0f0f0;border:1px solid #444;border-radius:1px"><div style="left:2px;top:2px;width:5px;height:3px;border:1px solid #444"></div></div>
<div class="btn" style="left:1867px;top:55px;width:32px;height:18px;"></div>
<svg style="position:absolute;left:1876px;top:58px" width="14" height="12" viewBox="0 0 14 12"><path d="M3.4 3.4 L10.4 8.8 M10.4 3.4 L3.4 8.8" stroke="#3a3a3a" stroke-width="3.8" stroke-linecap="round"/><path d="M3.4 3.4 L10.4 8.8 M10.4 3.4 L3.4 8.8" stroke="#f6f6f6" stroke-width="1.7" stroke-linecap="round"/></svg>
<div style="left:676px;top:76px;width:1225px;height:892px;background:#f0f0f0"></div>
<div class="t" style="left:703px;top:82px;color:#0b48c8;font-size:12px">目录</div>
<div class="t" style="left:784px;top:82px;color:#0b48c8;font-size:12px">打印</div>
<div class="t" style="left:849px;top:82px;color:#0b48c8;font-size:12px">图形</div>
<div class="t" style="left:923px;top:82px;color:#0b48c8;font-size:12px">保存</div>
<div class="t" style="left:1005px;top:82px;color:#0b48c8;font-size:12px">日期</div>
<div class="t" style="left:1077px;top:82px;color:#0b48c8;font-size:12px">功能</div>
<div class="t" style="left:1133px;top:82px;color:#0b48c8;font-size:12px">附加条件</div>
<div class="t" style="left:1216px;top:82px;color:#0b48c8;font-size:12px">提取<span style="font-family:'Liberation Serif',serif;font-size:11px;text-decoration:underline">F</span></div>
<div class="t" style="left:1332px;top:82px;color:#000;font-size:12px">自适应高度</div>
<div class="t" style="left:1425px;top:82px;color:#0b48c8;font-size:12px">数据分析</div>
<div class="t" style="left:1840px;top:82px;color:#0b48c8;font-size:12px">返回<span style="font-family:'Liberation Serif',serif;font-size:11px;text-decoration:underline">R</span></div>
<svg style="position:absolute;left:765px;top:84px" width="12" height="12" viewBox="0 0 12 12"><path d="M4 1 H8 V6 H11 L6 11 L1 6 H4 Z" fill="#606060" transform="translate(0.6,0.8)"/><path d="M4 1 H8 V6 H11 L6 11 L1 6 H4 Z" fill="#0010f0"/></svg>
<svg style="position:absolute;left:987px;top:84px" width="12" height="12" viewBox="0 0 12 12"><path d="M4 1 H8 V6 H11 L6 11 L1 6 H4 Z" fill="#606060" transform="translate(0.6,0.8)"/><path d="M4 1 H8 V6 H11 L6 11 L1 6 H4 Z" fill="#0010f0"/></svg>
<svg style="position:absolute;left:1058px;top:84px" width="12" height="12" viewBox="0 0 12 12"><path d="M4 1 H8 V6 H11 L6 11 L1 6 H4 Z" fill="#606060" transform="translate(0.6,0.8)"/><path d="M4 1 H8 V6 H11 L6 11 L1 6 H4 Z" fill="#0010f0"/></svg>
<div style="left:1316px;top:82px;width:13px;height:13px;background:#1a62c8;border-radius:3px"></div>
<svg style="position:absolute;left:1316px;top:82px" width="13" height="13" viewBox="0 0 13 13"><path d="M3 6.5 L5.5 9 L10 4" stroke="#fff" stroke-width="1.6" fill="none"/></svg>
<div style="left:852px;top:103px;width:1px;height:848px;background:#fbfbfb"></div>
<div style="left:860px;top:120px;width:2px;height:506px;background:#858585"></div>
<div style="left:869px;top:103px;width:1px;height:865px;background:#a9c9f0"></div>
<div style="left:693px;top:959px;width:126px;height:2px;background:#8a8a8a"></div>
<div style="left:676px;top:951px;width:177px;height:1px;background:#fbfbfb"></div>
<div style="left:676px;top:103px;width:176px;height:848px;overflow:hidden">
<div style="left:11px;top:11px;width:1px;height:814px;border-left:1px dotted #8a8a8a"></div>
<div style="left:12px;top:12px;width:10px;height:1px;border-top:1px dotted #8a8a8a"></div>
<div style="left:12px;top:34px;width:10px;height:1px;border-top:1px dotted #8a8a8a"></div>
<div style="left:12px;top:56px;width:10px;height:1px;border-top:1px dotted #8a8a8a"></div>
<div style="left:31px;top:78px;width:10px;height:1px;border-top:1px dotted #8a8a8a"></div>
<div style="left:31px;top:100px;width:10px;height:1px;border-top:1px dotted #8a8a8a"></div>
<div style="left:31px;top:122px;width:10px;height:1px;border-top:1px dotted #8a8a8a"></div>
<div style="left:31px;top:144px;width:10px;height:1px;border-top:1px dotted #8a8a8a"></div>
<div style="left:31px;top:166px;width:10px;height:1px;border-top:1px dotted #8a8a8a"></div>
<div style="left:31px;top:188px;width:10px;height:1px;border-top:1px dotted #8a8a8a"></div>
<div style="left:31px;top:210px;width:10px;height:1px;border-top:1px dotted #8a8a8a"></div>
<div style="left:31px;top:232px;width:10px;height:1px;border-top:1px dotted #8a8a8a"></div>
<div style="left:12px;top:254px;width:10px;height:1px;border-top:1px dotted #8a8a8a"></div>
<div style="left:31px;top:276px;width:10px;height:1px;border-top:1px dotted #8a8a8a"></div>
<div style="left:31px;top:298px;width:10px;height:1px;border-top:1px dotted #8a8a8a"></div>
<div style="left:31px;top:320px;width:10px;height:1px;border-top:1px dotted #8a8a8a"></div>
<div style="left:31px;top:342px;width:10px;height:1px;border-top:1px dotted #8a8a8a"></div>
<div style="left:31px;top:364px;width:10px;height:1px;border-top:1px dotted #8a8a8a"></div>
<div style="left:31px;top:386px;width:10px;height:1px;border-top:1px dotted #8a8a8a"></div>
<div style="left:31px;top:408px;width:10px;height:1px;border-top:1px dotted #8a8a8a"></div>
<div style="left:31px;top:430px;width:10px;height:1px;border-top:1px dotted #8a8a8a"></div>
<div style="left:31px;top:452px;width:10px;height:1px;border-top:1px dotted #8a8a8a"></div>
<div style="left:31px;top:474px;width:10px;height:1px;border-top:1px dotted #8a8a8a"></div>
<div style="left:31px;top:496px;width:10px;height:1px;border-top:1px dotted #8a8a8a"></div>
<div style="left:31px;top:518px;width:10px;height:1px;border-top:1px dotted #8a8a8a"></div>
<div style="left:31px;top:540px;width:10px;height:1px;border-top:1px dotted #8a8a8a"></div>
<div style="left:12px;top:562px;width:10px;height:1px;border-top:1px dotted #8a8a8a"></div>
<div style="left:12px;top:584px;width:10px;height:1px;border-top:1px dotted #8a8a8a"></div>
<div style="left:12px;top:606px;width:10px;height:1px;border-top:1px dotted #8a8a8a"></div>
<div style="left:12px;top:628px;width:10px;height:1px;border-top:1px dotted #8a8a8a"></div>
<div style="left:31px;top:650px;width:10px;height:1px;border-top:1px dotted #8a8a8a"></div>
<div style="left:31px;top:672px;width:10px;height:1px;border-top:1px dotted #8a8a8a"></div>
<div style="left:31px;top:694px;width:10px;height:1px;border-top:1px dotted #8a8a8a"></div>
<div style="left:31px;top:716px;width:10px;height:1px;border-top:1px dotted #8a8a8a"></div>
<div style="left:31px;top:738px;width:10px;height:1px;border-top:1px dotted #8a8a8a"></div>
<div style="left:31px;top:760px;width:10px;height:1px;border-top:1px dotted #8a8a8a"></div>
<div style="left:31px;top:782px;width:10px;height:1px;border-top:1px dotted #8a8a8a"></div>
<div style="left:31px;top:804px;width:10px;height:1px;border-top:1px dotted #8a8a8a"></div>
<div style="left:12px;top:826px;width:10px;height:1px;border-top:1px dotted #8a8a8a"></div>
<div style="left:31px;top:848px;width:10px;height:1px;border-top:1px dotted #8a8a8a"></div>
<div style="left:30px;top:65px;width:1px;height:167px;border-left:1px dotted #8a8a8a"></div>
<div style="left:30px;top:263px;width:1px;height:277px;border-left:1px dotted #8a8a8a"></div>
<div style="left:30px;top:637px;width:1px;height:167px;border-left:1px dotted #8a8a8a"></div>
<div style="left:30px;top:835px;width:1px;height:13px;border-left:1px dotted #8a8a8a"></div>
<div style="left:30px;top:833px;width:1px;height:24px;border-left:1px dotted #8a8a8a"></div>
<svg style="position:absolute;left:23px;top:5px" width="13" height="13" viewBox="0 0 13 13"><path d="M0.5 2.5 V1.5 L1.5 0.5 H5.5 L6.5 2.5" fill="#fff" stroke="#000" stroke-width="1"/><rect x="0.5" y="2.5" width="11" height="9" fill="#ffff78" stroke="#000" stroke-width="1"/><rect x="0" y="11" width="12" height="1" fill="#000"/></svg>
<div class="t" style="left:43px;top:4px;font-size:13px;color:#3c3c3c">常用报表</div>
<div style="left:5px;top:27px;width:13px;height:13px;background:#f0f0f0"></div>
<svg style="position:absolute;left:6px;top:28px" width="10" height="12" viewBox="0 0 10 12"><path d="M2.2 1.2 L6.5 5.7 L2.2 10.2" stroke="#8c8c8c" stroke-width="1.7" fill="none"/></svg>
<svg style="position:absolute;left:23px;top:27px" width="13" height="13" viewBox="0 0 13 13"><path d="M0.5 2.5 V1.5 L1.5 0.5 H5.5 L6.5 2.5" fill="#fff" stroke="#000" stroke-width="1"/><rect x="0.5" y="2.5" width="11" height="9" fill="#ffff78" stroke="#000" stroke-width="1"/><rect x="0" y="11" width="12" height="1" fill="#000"/></svg>
<div class="t" style="left:43px;top:26px;font-size:13px;color:#3c3c3c">销售类单据列表</div>
<div style="left:5px;top:49px;width:13px;height:13px;background:#f0f0f0"></div>
<svg style="position:absolute;left:5px;top:51px" width="12" height="10" viewBox="0 0 12 10"><path d="M1.2 1.8 L5.6 6.2 L10 1.8" stroke="#222" stroke-width="1.8" fill="none"/></svg>
<svg style="position:absolute;left:23px;top:49px" width="13" height="13" viewBox="0 0 13 13"><path d="M0.5 2.5 V1.5 L1.5 0.5 H5.5 L6.5 2.5" fill="#fff" stroke="#000" stroke-width="1"/><rect x="0.5" y="2.5" width="11" height="9" fill="#ffff78" stroke="#000" stroke-width="1"/><rect x="0" y="11" width="12" height="1" fill="#000"/></svg>
<div class="t" style="left:43px;top:48px;font-size:13px;color:#3c3c3c">销售类单据明细</div>
<div style="left:39px;top:66px;width:105px;height:22px;background:#b2b2b2;border-radius:2px"></div>
<svg style="position:absolute;left:41px;top:72px" width="18" height="10" viewBox="0 0 18 10" shape-rendering="crispEdges"><path d="M3 0 H10 L16 1 L14 3 L11 5 L9 8 H3 Z" fill="#fff"/><rect x="0" y="0" width="1" height="8" fill="#000"/><rect x="1" y="0" width="1" height="5" fill="#00e8f0"/><rect x="2" y="0" width="1" height="8" fill="#000"/><rect x="4" y="0" width="1" height="1" fill="#000"/><rect x="11" y="0" width="2" height="1" fill="#000"/><rect x="10" y="1" width="1" height="1" fill="#000"/><rect x="15" y="1" width="1" height="1" fill="#000"/><rect x="11" y="2" width="3" height="1" fill="#000"/><rect x="8" y="3" width="1" height="1" fill="#000"/><rect x="10" y="3" width="2" height="1" fill="#000"/><rect x="7" y="4" width="1" height="1" fill="#000"/><rect x="10" y="4" width="1" height="1" fill="#000"/><rect x="7" y="5" width="1" height="2" fill="#000"/><rect x="5" y="7" width="3" height="1" fill="#000"/></svg>
<div class="t" style="left:62px;top:70px;font-size:13px;color:#101010">销售订单明细</div>
<svg style="position:absolute;left:42px;top:93px" width="13" height="13" viewBox="0 0 13 13"><path d="M0.5 2.5 V1.5 L1.5 0.5 H5.5 L6.5 2.5" fill="#fff" stroke="#000" stroke-width="1"/><rect x="0.5" y="2.5" width="11" height="9" fill="#ffff78" stroke="#000" stroke-width="1"/><rect x="0" y="11" width="12" height="1" fill="#000"/></svg>
<div class="t" style="left:62px;top:92px;font-size:13px;color:#3c3c3c">销售发货明细</div>
<svg style="position:absolute;left:42px;top:115px" width="13" height="13" viewBox="0 0 13 13"><path d="M0.5 2.5 V1.5 L1.5 0.5 H5.5 L6.5 2.5" fill="#fff" stroke="#000" stroke-width="1"/><rect x="0.5" y="2.5" width="11" height="9" fill="#ffff78" stroke="#000" stroke-width="1"/><rect x="0" y="11" width="12" height="1" fill="#000"/></svg>
<div class="t" style="left:62px;top:114px;font-size:13px;color:#3c3c3c">销售发票明细</div>
<svg style="position:absolute;left:42px;top:137px" width="13" height="13" viewBox="0 0 13 13"><path d="M0.5 2.5 V1.5 L1.5 0.5 H5.5 L6.5 2.5" fill="#fff" stroke="#000" stroke-width="1"/><rect x="0.5" y="2.5" width="11" height="9" fill="#ffff78" stroke="#000" stroke-width="1"/><rect x="0" y="11" width="12" height="1" fill="#000"/></svg>
<div class="t" style="left:62px;top:136px;font-size:13px;color:#3c3c3c">销售退货明细</div>
<svg style="position:absolute;left:42px;top:159px" width="13" height="13" viewBox="0 0 13 13"><path d="M0.5 2.5 V1.5 L1.5 0.5 H5.5 L6.5 2.5" fill="#fff" stroke="#000" stroke-width="1"/><rect x="0.5" y="2.5" width="11" height="9" fill="#ffff78" stroke="#000" stroke-width="1"/><rect x="0" y="11" width="12" height="1" fill="#000"/></svg>
<div class="t" style="left:62px;top:158px;font-size:13px;color:#3c3c3c">报价单明细</div>
<svg style="position:absolute;left:42px;top:181px" width="13" height="13" viewBox="0 0 13 13"><path d="M0.5 2.5 V1.5 L1.5 0.5 H5.5 L6.5 2.5" fill="#fff" stroke="#000" stroke-width="1"/><rect x="0.5" y="2.5" width="11" height="9" fill="#ffff78" stroke="#000" stroke-width="1"/><rect x="0" y="11" width="12" height="1" fill="#000"/></svg>
<div class="t" style="left:62px;top:180px;font-size:13px;color:#3c3c3c">Pos销售明细</div>
<svg style="position:absolute;left:42px;top:203px" width="13" height="13" viewBox="0 0 13 13"><path d="M0.5 2.5 V1.5 L1.5 0.5 H5.5 L6.5 2.5" fill="#fff" stroke="#000" stroke-width="1"/><rect x="0.5" y="2.5" width="11" height="9" fill="#ffff78" stroke="#000" stroke-width="1"/><rect x="0" y="11" width="12" height="1" fill="#000"/></svg>
<div class="t" style="left:62px;top:202px;font-size:13px;color:#3c3c3c">现货销售明细</div>
<svg style="position:absolute;left:42px;top:225px" width="13" height="13" viewBox="0 0 13 13"><path d="M0.5 2.5 V1.5 L1.5 0.5 H5.5 L6.5 2.5" fill="#fff" stroke="#000" stroke-width="1"/><rect x="0.5" y="2.5" width="11" height="9" fill="#ffff78" stroke="#000" stroke-width="1"/><rect x="0" y="11" width="12" height="1" fill="#000"/></svg>
<div class="t" style="left:62px;top:224px;font-size:13px;color:#3c3c3c">退换单明细</div>
<div style="left:5px;top:247px;width:13px;height:13px;background:#f0f0f0"></div>
<svg style="position:absolute;left:5px;top:249px" width="12" height="10" viewBox="0 0 12 10"><path d="M1.2 1.8 L5.6 6.2 L10 1.8" stroke="#222" stroke-width="1.8" fill="none"/></svg>
<svg style="position:absolute;left:23px;top:247px" width="13" height="13" viewBox="0 0 13 13"><path d="M0.5 2.5 V1.5 L1.5 0.5 H5.5 L6.5 2.5" fill="#fff" stroke="#000" stroke-width="1"/><rect x="0.5" y="2.5" width="11" height="9" fill="#ffff78" stroke="#000" stroke-width="1"/><rect x="0" y="11" width="12" height="1" fill="#000"/></svg>
<div class="t" style="left:43px;top:246px;font-size:13px;color:#3c3c3c">客户报表</div>
<svg style="position:absolute;left:42px;top:269px" width="13" height="13" viewBox="0 0 13 13"><path d="M0.5 2.5 V1.5 L1.5 0.5 H5.5 L6.5 2.5" fill="#fff" stroke="#000" stroke-width="1"/><rect x="0.5" y="2.5" width="11" height="9" fill="#ffff78" stroke="#000" stroke-width="1"/><rect x="0" y="11" width="12" height="1" fill="#000"/></svg>
<div class="t" style="left:62px;top:268px;font-size:13px;color:#3c3c3c">客户按登记类型</div>
<svg style="position:absolute;left:42px;top:291px" width="13" height="13" viewBox="0 0 13 13"><path d="M0.5 2.5 V1.5 L1.5 0.5 H5.5 L6.5 2.5" fill="#fff" stroke="#000" stroke-width="1"/><rect x="0.5" y="2.5" width="11" height="9" fill="#ffff78" stroke="#000" stroke-width="1"/><rect x="0" y="11" width="12" height="1" fill="#000"/></svg>
<div class="t" style="left:62px;top:290px;font-size:13px;color:#3c3c3c">客户按客户来源</div>
<svg style="position:absolute;left:42px;top:313px" width="13" height="13" viewBox="0 0 13 13"><path d="M0.5 2.5 V1.5 L1.5 0.5 H5.5 L6.5 2.5" fill="#fff" stroke="#000" stroke-width="1"/><rect x="0.5" y="2.5" width="11" height="9" fill="#ffff78" stroke="#000" stroke-width="1"/><rect x="0" y="11" width="12" height="1" fill="#000"/></svg>
<div class="t" style="left:62px;top:312px;font-size:13px;color:#3c3c3c">客户按客户级别</div>
<svg style="position:absolute;left:42px;top:335px" width="13" height="13" viewBox="0 0 13 13"><path d="M0.5 2.5 V1.5 L1.5 0.5 H5.5 L6.5 2.5" fill="#fff" stroke="#000" stroke-width="1"/><rect x="0.5" y="2.5" width="11" height="9" fill="#ffff78" stroke="#000" stroke-width="1"/><rect x="0" y="11" width="12" height="1" fill="#000"/></svg>
<div class="t" style="left:62px;top:334px;font-size:13px;color:#3c3c3c">客户按信用级别</div>
<svg style="position:absolute;left:42px;top:357px" width="13" height="13" viewBox="0 0 13 13"><path d="M0.5 2.5 V1.5 L1.5 0.5 H5.5 L6.5 2.5" fill="#fff" stroke="#000" stroke-width="1"/><rect x="0.5" y="2.5" width="11" height="9" fill="#ffff78" stroke="#000" stroke-width="1"/><rect x="0" y="11" width="12" height="1" fill="#000"/></svg>
<div class="t" style="left:62px;top:356px;font-size:13px;color:#3c3c3c">客户按忠诚级别</div>
<svg style="position:absolute;left:42px;top:379px" width="13" height="13" viewBox="0 0 13 13"><path d="M0.5 2.5 V1.5 L1.5 0.5 H5.5 L6.5 2.5" fill="#fff" stroke="#000" stroke-width="1"/><rect x="0.5" y="2.5" width="11" height="9" fill="#ffff78" stroke="#000" stroke-width="1"/><rect x="0" y="11" width="12" height="1" fill="#000"/></svg>
<div class="t" style="left:62px;top:378px;font-size:13px;color:#3c3c3c">客户按满意级别</div>
<svg style="position:absolute;left:42px;top:401px" width="13" height="13" viewBox="0 0 13 13"><path d="M0.5 2.5 V1.5 L1.5 0.5 H5.5 L6.5 2.5" fill="#fff" stroke="#000" stroke-width="1"/><rect x="0.5" y="2.5" width="11" height="9" fill="#ffff78" stroke="#000" stroke-width="1"/><rect x="0" y="11" width="12" height="1" fill="#000"/></svg>
<div class="t" style="left:62px;top:400px;font-size:13px;color:#3c3c3c">客户按客户关系</div>
<svg style="position:absolute;left:42px;top:423px" width="13" height="13" viewBox="0 0 13 13"><path d="M0.5 2.5 V1.5 L1.5 0.5 H5.5 L6.5 2.5" fill="#fff" stroke="#000" stroke-width="1"/><rect x="0.5" y="2.5" width="11" height="9" fill="#ffff78" stroke="#000" stroke-width="1"/><rect x="0" y="11" width="12" height="1" fill="#000"/></svg>
<div class="t" style="left:62px;top:422px;font-size:13px;color:#3c3c3c">客户按所属行业</div>
<svg style="position:absolute;left:42px;top:445px" width="13" height="13" viewBox="0 0 13 13"><path d="M0.5 2.5 V1.5 L1.5 0.5 H5.5 L6.5 2.5" fill="#fff" stroke="#000" stroke-width="1"/><rect x="0.5" y="2.5" width="11" height="9" fill="#ffff78" stroke="#000" stroke-width="1"/><rect x="0" y="11" width="12" height="1" fill="#000"/></svg>
<div class="t" style="left:62px;top:444px;font-size:13px;color:#3c3c3c">客户按公司规模</div>
<svg style="position:absolute;left:42px;top:467px" width="13" height="13" viewBox="0 0 13 13"><path d="M0.5 2.5 V1.5 L1.5 0.5 H5.5 L6.5 2.5" fill="#fff" stroke="#000" stroke-width="1"/><rect x="0.5" y="2.5" width="11" height="9" fill="#ffff78" stroke="#000" stroke-width="1"/><rect x="0" y="11" width="12" height="1" fill="#000"/></svg>
<div class="t" style="left:62px;top:466px;font-size:13px;color:#3c3c3c">客户按公司性质</div>
<svg style="position:absolute;left:42px;top:489px" width="13" height="13" viewBox="0 0 13 13"><path d="M0.5 2.5 V1.5 L1.5 0.5 H5.5 L6.5 2.5" fill="#fff" stroke="#000" stroke-width="1"/><rect x="0.5" y="2.5" width="11" height="9" fill="#ffff78" stroke="#000" stroke-width="1"/><rect x="0" y="11" width="12" height="1" fill="#000"/></svg>
<div class="t" style="left:62px;top:488px;font-size:13px;color:#3c3c3c">客户按城区分布</div>
<svg style="position:absolute;left:42px;top:511px" width="13" height="13" viewBox="0 0 13 13"><path d="M0.5 2.5 V1.5 L1.5 0.5 H5.5 L6.5 2.5" fill="#fff" stroke="#000" stroke-width="1"/><rect x="0.5" y="2.5" width="11" height="9" fill="#ffff78" stroke="#000" stroke-width="1"/><rect x="0" y="11" width="12" height="1" fill="#000"/></svg>
<div class="t" style="left:62px;top:510px;font-size:13px;color:#3c3c3c">客户按发展商统计</div>
<svg style="position:absolute;left:42px;top:533px" width="13" height="13" viewBox="0 0 13 13"><path d="M0.5 2.5 V1.5 L1.5 0.5 H5.5 L6.5 2.5" fill="#fff" stroke="#000" stroke-width="1"/><rect x="0.5" y="2.5" width="11" height="9" fill="#ffff78" stroke="#000" stroke-width="1"/><rect x="0" y="11" width="12" height="1" fill="#000"/></svg>
<div class="t" style="left:62px;top:532px;font-size:13px;color:#3c3c3c">客户清单查询清单</div>
<div style="left:5px;top:555px;width:13px;height:13px;background:#f0f0f0"></div>
<svg style="position:absolute;left:6px;top:556px" width="10" height="12" viewBox="0 0 10 12"><path d="M2.2 1.2 L6.5 5.7 L2.2 10.2" stroke="#8c8c8c" stroke-width="1.7" fill="none"/></svg>
<svg style="position:absolute;left:23px;top:555px" width="13" height="13" viewBox="0 0 13 13"><path d="M0.5 2.5 V1.5 L1.5 0.5 H5.5 L6.5 2.5" fill="#fff" stroke="#000" stroke-width="1"/><rect x="0.5" y="2.5" width="11" height="9" fill="#ffff78" stroke="#000" stroke-width="1"/><rect x="0" y="11" width="12" height="1" fill="#000"/></svg>
<div class="t" style="left:43px;top:554px;font-size:13px;color:#3c3c3c">销售产品日报</div>
<div style="left:5px;top:577px;width:13px;height:13px;background:#f0f0f0"></div>
<svg style="position:absolute;left:6px;top:578px" width="10" height="12" viewBox="0 0 10 12"><path d="M2.2 1.2 L6.5 5.7 L2.2 10.2" stroke="#8c8c8c" stroke-width="1.7" fill="none"/></svg>
<svg style="position:absolute;left:23px;top:577px" width="13" height="13" viewBox="0 0 13 13"><path d="M0.5 2.5 V1.5 L1.5 0.5 H5.5 L6.5 2.5" fill="#fff" stroke="#000" stroke-width="1"/><rect x="0.5" y="2.5" width="11" height="9" fill="#ffff78" stroke="#000" stroke-width="1"/><rect x="0" y="11" width="12" height="1" fill="#000"/></svg>
<div class="t" style="left:43px;top:576px;font-size:13px;color:#3c3c3c">销售产品月报</div>
<div style="left:5px;top:599px;width:13px;height:13px;background:#f0f0f0"></div>
<svg style="position:absolute;left:6px;top:600px" width="10" height="12" viewBox="0 0 10 12"><path d="M2.2 1.2 L6.5 5.7 L2.2 10.2" stroke="#8c8c8c" stroke-width="1.7" fill="none"/></svg>
<svg style="position:absolute;left:23px;top:599px" width="13" height="13" viewBox="0 0 13 13"><path d="M0.5 2.5 V1.5 L1.5 0.5 H5.5 L6.5 2.5" fill="#fff" stroke="#000" stroke-width="1"/><rect x="0.5" y="2.5" width="11" height="9" fill="#ffff78" stroke="#000" stroke-width="1"/><rect x="0" y="11" width="12" height="1" fill="#000"/></svg>
<div class="t" style="left:43px;top:598px;font-size:13px;color:#3c3c3c">销售单据日报</div>
<div style="left:5px;top:621px;width:13px;height:13px;background:#f0f0f0"></div>
<svg style="position:absolute;left:5px;top:623px" width="12" height="10" viewBox="0 0 12 10"><path d="M1.2 1.8 L5.6 6.2 L10 1.8" stroke="#222" stroke-width="1.8" fill="none"/></svg>
<svg style="position:absolute;left:23px;top:621px" width="13" height="13" viewBox="0 0 13 13"><path d="M0.5 2.5 V1.5 L1.5 0.5 H5.5 L6.5 2.5" fill="#fff" stroke="#000" stroke-width="1"/><rect x="0.5" y="2.5" width="11" height="9" fill="#ffff78" stroke="#000" stroke-width="1"/><rect x="0" y="11" width="12" height="1" fill="#000"/></svg>
<div class="t" style="left:43px;top:620px;font-size:13px;color:#3c3c3c">销售单据月报</div>
<svg style="position:absolute;left:42px;top:643px" width="13" height="13" viewBox="0 0 13 13"><path d="M0.5 2.5 V1.5 L1.5 0.5 H5.5 L6.5 2.5" fill="#fff" stroke="#000" stroke-width="1"/><rect x="0.5" y="2.5" width="11" height="9" fill="#ffff78" stroke="#000" stroke-width="1"/><rect x="0" y="11" width="12" height="1" fill="#000"/></svg>
<div class="t" style="left:62px;top:642px;font-size:13px;color:#3c3c3c">销售单据月报-汇总</div>
<svg style="position:absolute;left:42px;top:665px" width="13" height="13" viewBox="0 0 13 13"><path d="M0.5 2.5 V1.5 L1.5 0.5 H5.5 L6.5 2.5" fill="#fff" stroke="#000" stroke-width="1"/><rect x="0.5" y="2.5" width="11" height="9" fill="#ffff78" stroke="#000" stroke-width="1"/><rect x="0" y="11" width="12" height="1" fill="#000"/></svg>
<div class="t" style="left:62px;top:664px;font-size:13px;color:#3c3c3c">销售单据月报-营销区</div>
<svg style="position:absolute;left:42px;top:687px" width="13" height="13" viewBox="0 0 13 13"><path d="M0.5 2.5 V1.5 L1.5 0.5 H5.5 L6.5 2.5" fill="#fff" stroke="#000" stroke-width="1"/><rect x="0.5" y="2.5" width="11" height="9" fill="#ffff78" stroke="#000" stroke-width="1"/><rect x="0" y="11" width="12" height="1" fill="#000"/></svg>
<div class="t" style="left:62px;top:686px;font-size:13px;color:#3c3c3c">销售单据月报-客户</div>
<svg style="position:absolute;left:42px;top:709px" width="13" height="13" viewBox="0 0 13 13"><path d="M0.5 2.5 V1.5 L1.5 0.5 H5.5 L6.5 2.5" fill="#fff" stroke="#000" stroke-width="1"/><rect x="0.5" y="2.5" width="11" height="9" fill="#ffff78" stroke="#000" stroke-width="1"/><rect x="0" y="11" width="12" height="1" fill="#000"/></svg>
<div class="t" style="left:62px;top:708px;font-size:13px;color:#3c3c3c">销售单据月报-部门</div>
<svg style="position:absolute;left:42px;top:731px" width="13" height="13" viewBox="0 0 13 13"><path d="M0.5 2.5 V1.5 L1.5 0.5 H5.5 L6.5 2.5" fill="#fff" stroke="#000" stroke-width="1"/><rect x="0.5" y="2.5" width="11" height="9" fill="#ffff78" stroke="#000" stroke-width="1"/><rect x="0" y="11" width="12" height="1" fill="#000"/></svg>
<div class="t" style="left:62px;top:730px;font-size:13px;color:#3c3c3c">销售单据月报-业务员</div>
<svg style="position:absolute;left:42px;top:753px" width="13" height="13" viewBox="0 0 13 13"><path d="M0.5 2.5 V1.5 L1.5 0.5 H5.5 L6.5 2.5" fill="#fff" stroke="#000" stroke-width="1"/><rect x="0.5" y="2.5" width="11" height="9" fill="#ffff78" stroke="#000" stroke-width="1"/><rect x="0" y="11" width="12" height="1" fill="#000"/></svg>
<div class="t" style="left:62px;top:752px;font-size:13px;color:#3c3c3c">销售单据月报-单据分</div>
<svg style="position:absolute;left:42px;top:775px" width="13" height="13" viewBox="0 0 13 13"><path d="M0.5 2.5 V1.5 L1.5 0.5 H5.5 L6.5 2.5" fill="#fff" stroke="#000" stroke-width="1"/><rect x="0.5" y="2.5" width="11" height="9" fill="#ffff78" stroke="#000" stroke-width="1"/><rect x="0" y="11" width="12" height="1" fill="#000"/></svg>
<div class="t" style="left:62px;top:774px;font-size:13px;color:#3c3c3c">销售单据月报-单据</div>
<svg style="position:absolute;left:42px;top:797px" width="13" height="13" viewBox="0 0 13 13"><path d="M0.5 2.5 V1.5 L1.5 0.5 H5.5 L6.5 2.5" fill="#fff" stroke="#000" stroke-width="1"/><rect x="0.5" y="2.5" width="11" height="9" fill="#ffff78" stroke="#000" stroke-width="1"/><rect x="0" y="11" width="12" height="1" fill="#000"/></svg>
<div class="t" style="left:62px;top:796px;font-size:13px;color:#3c3c3c">销售单据月报-发展商</div>
<div style="left:5px;top:819px;width:13px;height:13px;background:#f0f0f0"></div>
<svg style="position:absolute;left:5px;top:821px" width="12" height="10" viewBox="0 0 12 10"><path d="M1.2 1.8 L5.6 6.2 L10 1.8" stroke="#222" stroke-width="1.8" fill="none"/></svg>
<svg style="position:absolute;left:23px;top:819px" width="13" height="13" viewBox="0 0 13 13"><path d="M0.5 2.5 V1.5 L1.5 0.5 H5.5 L6.5 2.5" fill="#fff" stroke="#000" stroke-width="1"/><rect x="0.5" y="2.5" width="11" height="9" fill="#ffff78" stroke="#000" stroke-width="1"/><rect x="0" y="11" width="12" height="1" fill="#000"/></svg>
<div class="t" style="left:43px;top:818px;font-size:13px;color:#3c3c3c">销售产品统计</div>
<svg style="position:absolute;left:42px;top:841px" width="13" height="13" viewBox="0 0 13 13"><path d="M0.5 2.5 V1.5 L1.5 0.5 H5.5 L6.5 2.5" fill="#fff" stroke="#000" stroke-width="1"/><rect x="0.5" y="2.5" width="11" height="9" fill="#ffff78" stroke="#000" stroke-width="1"/><rect x="0" y="11" width="12" height="1" fill="#000"/></svg>
<div class="t" style="left:62px;top:840px;font-size:13px;color:#3c3c3c">销售产品-汇总</div>
</div>
<div style="left:872px;top:104px;width:42px;height:23px;background:#cde8fd;border:1px solid #a6d0f8;border-radius:3px"></div>
<div class="t" style="left:882px;top:108px;color:#0b48c8;font-size:12px">常用</div>
<div class="t" style="left:880px;top:133px;color:#0b48c8;font-size:12px">更多</div>
<div style="left:921px;top:110px;width:13px;height:13px;background:#c6c6c6;border-radius:3px"></div>
<svg style="position:absolute;left:921px;top:110px" width="13" height="13" viewBox="0 0 13 13"><path d="M3 6.5 L5.5 9 L10 4" stroke="#f4f4f4" stroke-width="1.4" fill="none"/></svg>
<div class="t" style="left:937px;top:109px;color:#8c8c8c">起始日期</div>
<div class="cmb" style="left:1009px;top:107px;width:219px;height:20px;"></div>
<div class="t" style="left:1011px;top:109px;"><span class=m>2024-03-07</span></div>
<svg style="position:absolute;left:1201px;top:111px" width="24" height="13" viewBox="0 0 24 13"><rect x="0.5" y="0.5" width="10" height="11" rx="1.3" fill="#eef2fa" stroke="#6a5c58"/><rect x="2" y="3" width="6.5" height="7" fill="#b4b8c0"/><path d="M3 4h1v1h-1zM5 4h1v1h-1zM7 4h1v1h-1zM3 6h1v1h-1zM5 6h1v1h-1zM7 6h1v1h-1zM3 8h1v1h-1zM5 8h1v1h-1zM7 8h1v1h-1z" fill="#fff"/><path d="M13 4 L20 4 L16.5 8 Z" fill="#34507e"/></svg>
<div style="left:1247px;top:110px;width:13px;height:13px;background:#c6c6c6;border-radius:3px"></div>
<svg style="position:absolute;left:1247px;top:110px" width="13" height="13" viewBox="0 0 13 13"><path d="M3 6.5 L5.5 9 L10 4" stroke="#f4f4f4" stroke-width="1.4" fill="none"/></svg>
<div class="t" style="left:1263px;top:109px;color:#8c8c8c">结束日期</div>
<div class="cmb" style="left:1335px;top:107px;width:219px;height:20px;"></div>
<div class="t" style="left:1337px;top:109px;"><span class=m>2024-03-07</span></div>
<svg style="position:absolute;left:1527px;top:111px" width="24" height="13" viewBox="0 0 24 13"><rect x="0.5" y="0.5" width="10" height="11" rx="1.3" fill="#eef2fa" stroke="#6a5c58"/><rect x="2" y="3" width="6.5" height="7" fill="#b4b8c0"/><path d="M3 4h1v1h-1zM5 4h1v1h-1zM7 4h1v1h-1zM3 6h1v1h-1zM5 6h1v1h-1zM7 6h1v1h-1zM3 8h1v1h-1zM5 8h1v1h-1zM7 8h1v1h-1z" fill="#fff"/><path d="M13 4 L20 4 L16.5 8 Z" fill="#34507e"/></svg>
<div class="cb" style="left:1573px;top:110px;width:13px;height:13px;"></div>
<div class="t" style="left:1589px;top:109px;">营销区</div>
<div class="cmb" style="left:1662px;top:107px;width:218px;height:20px;"></div>
<div style="left:1665px;top:110px;width:195px;height:14px;background:#eef0fc"></div>
<svg style="position:absolute;left:1866px;top:115px" width="10" height="6" viewBox="0 0 10 6"><path d="M1 1 L5 5 L9 1" stroke="#505050" stroke-width="1.1" fill="none"/></svg>
<div style="left:1884px;top:120px;width:3px;height:2px;background:#5a82d8"></div>
<div style="left:1891px;top:120px;width:3px;height:2px;background:#5a82d8"></div>
<div style="left:1650px;top:110px;width:11px;height:11px;border:1px solid #555;border-radius:3px;background:#fff"></div>
<div class="cb" style="left:921px;top:134px;width:13px;height:13px;"></div>
<div class="t" style="left:937px;top:133px;">客户</div>
<div class="cmb" style="left:1009px;top:131px;width:219px;height:20px;"></div>
<div style="left:1012px;top:134px;width:196px;height:14px;background:#eef0fc"></div>
<svg style="position:absolute;left:1214px;top:139px" width="10" height="6" viewBox="0 0 10 6"><path d="M1 1 L5 5 L9 1" stroke="#505050" stroke-width="1.1" fill="none"/></svg>
<div style="left:1232px;top:144px;width:3px;height:2px;background:#5a82d8"></div>
<div style="left:1239px;top:144px;width:3px;height:2px;background:#5a82d8"></div>
<div class="cb" style="left:1247px;top:134px;width:13px;height:13px;"></div>
<div class="t" style="left:1263px;top:133px;">我的分组</div>
<div class="cmb" style="left:1335px;top:131px;width:219px;height:20px;"></div>
<div style="left:1338px;top:134px;width:196px;height:14px;background:#e8f6fb"></div>
<svg style="position:absolute;left:1540px;top:139px" width="10" height="6" viewBox="0 0 10 6"><path d="M1 1 L5 5 L9 1" stroke="#505050" stroke-width="1.1" fill="none"/></svg>
<div style="left:1558px;top:144px;width:3px;height:2px;background:#5a82d8"></div>
<div style="left:1565px;top:144px;width:3px;height:2px;background:#5a82d8"></div>
<div class="cb" style="left:1573px;top:134px;width:13px;height:13px;"></div>
<div class="t" style="left:1589px;top:133px;">账户</div>
<div class="cmb" style="left:1662px;top:131px;width:218px;height:20px;"></div>
<div style="left:1665px;top:134px;width:195px;height:14px;background:#eef0fc"></div>
<svg style="position:absolute;left:1866px;top:139px" width="10" height="6" viewBox="0 0 10 6"><path d="M1 1 L5 5 L9 1" stroke="#505050" stroke-width="1.1" fill="none"/></svg>
<div style="left:1884px;top:144px;width:3px;height:2px;background:#5a82d8"></div>
<div style="left:1891px;top:144px;width:3px;height:2px;background:#5a82d8"></div>
<div class="cb" style="left:921px;top:158px;width:13px;height:13px;"></div>
<div class="t" style="left:937px;top:157px;">单据状态</div>
<div class="cmb" style="left:1009px;top:155px;width:219px;height:20px;"></div>
<div style="left:1012px;top:158px;width:196px;height:14px;background:#eef0fc"></div>
<svg style="position:absolute;left:1214px;top:163px" width="10" height="6" viewBox="0 0 10 6"><path d="M1 1 L5 5 L9 1" stroke="#505050" stroke-width="1.1" fill="none"/></svg>
<div style="left:1232px;top:168px;width:3px;height:2px;background:#5a82d8"></div>
<div style="left:1239px;top:168px;width:3px;height:2px;background:#5a82d8"></div>
<div class="cb" style="left:1247px;top:158px;width:13px;height:13px;"></div>
<div class="t" style="left:1263px;top:157px;">产品性质</div>
<div class="cmb" style="left:1335px;top:155px;width:219px;height:20px;"></div>
<div style="left:1338px;top:158px;width:196px;height:14px;background:#eef0fc"></div>
<svg style="position:absolute;left:1540px;top:163px" width="10" height="6" viewBox="0 0 10 6"><path d="M1 1 L5 5 L9 1" stroke="#505050" stroke-width="1.1" fill="none"/></svg>
<div style="left:1558px;top:168px;width:3px;height:2px;background:#5a82d8"></div>
<div style="left:1565px;top:168px;width:3px;height:2px;background:#5a82d8"></div>
<div class="cb" style="left:1573px;top:158px;width:13px;height:13px;"></div>
<div class="t" style="left:1589px;top:157px;">目录</div>
<div class="cmb" style="left:1662px;top:155px;width:218px;height:20px;"></div>
<div style="left:1665px;top:158px;width:195px;height:14px;background:#eef0fc"></div>
<svg style="position:absolute;left:1866px;top:163px" width="10" height="6" viewBox="0 0 10 6"><path d="M1 1 L5 5 L9 1" stroke="#505050" stroke-width="1.1" fill="none"/></svg>
<div style="left:1884px;top:168px;width:3px;height:2px;background:#5a82d8"></div>
<div style="left:1891px;top:168px;width:3px;height:2px;background:#5a82d8"></div>
<div style="left:1650px;top:158px;width:11px;height:11px;border:1px solid #555;border-radius:3px;background:#fff"></div>
<div class="cb" style="left:921px;top:182px;width:13px;height:13px;"></div>
<div class="t" style="left:937px;top:181px;">产品</div>
<div class="cmb" style="left:1009px;top:179px;width:219px;height:20px;"></div>
<div style="left:1012px;top:182px;width:196px;height:14px;background:#eef0fc"></div>
<svg style="position:absolute;left:1214px;top:187px" width="10" height="6" viewBox="0 0 10 6"><path d="M1 1 L5 5 L9 1" stroke="#505050" stroke-width="1.1" fill="none"/></svg>
<div style="left:1232px;top:192px;width:3px;height:2px;background:#5a82d8"></div>
<div style="left:1239px;top:192px;width:3px;height:2px;background:#5a82d8"></div>
<div class="cb" style="left:1247px;top:182px;width:13px;height:13px;"></div>
<div class="t" style="left:1263px;top:181px;">产品查询</div>
<div class="inp" style="left:1336px;top:180px;width:218px;height:19px;"></div>
<div class="cb" style="left:1573px;top:182px;width:13px;height:13px;"></div>
<div class="t" style="left:1589px;top:181px;">产品分组</div>
<div class="cmb" style="left:1662px;top:179px;width:218px;height:20px;"></div>
<div style="left:1665px;top:182px;width:195px;height:14px;background:#e8f6fb"></div>
<svg style="position:absolute;left:1866px;top:187px" width="10" height="6" viewBox="0 0 10 6"><path d="M1 1 L5 5 L9 1" stroke="#505050" stroke-width="1.1" fill="none"/></svg>
<div style="left:1884px;top:192px;width:3px;height:2px;background:#5a82d8"></div>
<div style="left:1891px;top:192px;width:3px;height:2px;background:#5a82d8"></div>
<div class="cb" style="left:921px;top:206px;width:13px;height:13px;"></div>
<div class="t" style="left:937px;top:205px;">批次编号</div>
<div class="inp" style="left:1010px;top:204px;width:218px;height:19px;"></div>
<div class="cb" style="left:1247px;top:206px;width:13px;height:13px;"></div>
<div class="t" style="left:1263px;top:205px;">单据编号</div>
<div class="inp" style="left:1336px;top:204px;width:218px;height:19px;"></div>
<div class="cb" style="left:1573px;top:206px;width:13px;height:13px;"></div>
<div class="t" style="left:1589px;top:205px;">引用单号</div>
<div class="inp" style="left:1663px;top:204px;width:217px;height:19px;"></div>
<div class="cb" style="left:921px;top:230px;width:13px;height:13px;"></div>
<div class="t" style="left:937px;top:229px;">单据备注</div>
<div class="inp" style="left:1010px;top:228px;width:218px;height:19px;"></div>
<div class="cb" style="left:1247px;top:230px;width:13px;height:13px;"></div>
<div class="t" style="left:1263px;top:229px;">业务部门</div>
<div class="cmb" style="left:1335px;top:227px;width:219px;height:20px;"></div>
<div style="left:1338px;top:230px;width:196px;height:14px;background:#eef0fc"></div>
<svg style="position:absolute;left:1540px;top:235px" width="10" height="6" viewBox="0 0 10 6"><path d="M1 1 L5 5 L9 1" stroke="#505050" stroke-width="1.1" fill="none"/></svg>
<div style="left:1558px;top:240px;width:3px;height:2px;background:#5a82d8"></div>
<div style="left:1565px;top:240px;width:3px;height:2px;background:#5a82d8"></div>
<div class="cb" style="left:1573px;top:230px;width:13px;height:13px;"></div>
<div class="t" style="left:1589px;top:229px;">业务员</div>
<div class="cmb" style="left:1662px;top:227px;width:218px;height:20px;"></div>
<div style="left:1665px;top:230px;width:195px;height:14px;background:#eef0fc"></div>
<svg style="position:absolute;left:1866px;top:235px" width="10" height="6" viewBox="0 0 10 6"><path d="M1 1 L5 5 L9 1" stroke="#505050" stroke-width="1.1" fill="none"/></svg>
<div style="left:1884px;top:240px;width:3px;height:2px;background:#5a82d8"></div>
<div style="left:1891px;top:240px;width:3px;height:2px;background:#5a82d8"></div>
<div class="cb" style="left:921px;top:254px;width:13px;height:13px;"></div>
<div class="t" style="left:937px;top:253px;">录入员</div>
<div class="cmb" style="left:1009px;top:251px;width:219px;height:20px;"></div>
<div style="left:1012px;top:254px;width:196px;height:14px;background:#eef0fc"></div>
<svg style="position:absolute;left:1214px;top:259px" width="10" height="6" viewBox="0 0 10 6"><path d="M1 1 L5 5 L9 1" stroke="#505050" stroke-width="1.1" fill="none"/></svg>
<div style="left:1232px;top:264px;width:3px;height:2px;background:#5a82d8"></div>
<div style="left:1239px;top:264px;width:3px;height:2px;background:#5a82d8"></div>
<div class="cb" style="left:1247px;top:254px;width:13px;height:13px;"></div>
<div class="t" style="left:1263px;top:253px;">明细仓库</div>
<div class="cmb" style="left:1335px;top:251px;width:219px;height:20px;"></div>
<div style="left:1338px;top:254px;width:196px;height:14px;background:#e8f6fb"></div>
<svg style="position:absolute;left:1540px;top:259px" width="10" height="6" viewBox="0 0 10 6"><path d="M1 1 L5 5 L9 1" stroke="#505050" stroke-width="1.1" fill="none"/></svg>
<div style="left:1558px;top:264px;width:3px;height:2px;background:#5a82d8"></div>
<div style="left:1565px;top:264px;width:3px;height:2px;background:#5a82d8"></div>
<div class="cb" style="left:1573px;top:254px;width:13px;height:13px;"></div>
<div class="t" style="left:1589px;top:253px;">明细备注</div>
<div class="inp" style="left:1663px;top:252px;width:217px;height:19px;"></div>
<div class="cb" style="left:921px;top:278px;width:13px;height:13px;"></div>
<div class="t" style="left:937px;top:277px;">联系信息</div>
<div class="inp" style="left:1010px;top:276px;width:218px;height:19px;"></div>
<div class="cb" style="left:1247px;top:278px;width:13px;height:13px;"></div>
<div class="t" style="left:1263px;top:277px;">交付期起</div>
<div class="cmb" style="left:1335px;top:275px;width:219px;height:20px;"></div>
<svg style="position:absolute;left:1527px;top:279px" width="24" height="13" viewBox="0 0 24 13"><rect x="0.5" y="0.5" width="10" height="11" rx="1.3" fill="#eef2fa" stroke="#6a5c58"/><rect x="2" y="3" width="6.5" height="7" fill="#b4b8c0"/><path d="M3 4h1v1h-1zM5 4h1v1h-1zM7 4h1v1h-1zM3 6h1v1h-1zM5 6h1v1h-1zM7 6h1v1h-1zM3 8h1v1h-1zM5 8h1v1h-1zM7 8h1v1h-1z" fill="#fff"/><path d="M13 4 L20 4 L16.5 8 Z" fill="#34507e"/></svg>
<div class="cb" style="left:1573px;top:278px;width:13px;height:13px;"></div>
<div class="t" style="left:1589px;top:277px;">交付期止</div>
<div class="cmb" style="left:1662px;top:275px;width:218px;height:20px;"></div>
<svg style="position:absolute;left:1853px;top:279px" width="24" height="13" viewBox="0 0 24 13"><rect x="0.5" y="0.5" width="10" height="11" rx="1.3" fill="#eef2fa" stroke="#6a5c58"/><rect x="2" y="3" width="6.5" height="7" fill="#b4b8c0"/><path d="M3 4h1v1h-1zM5 4h1v1h-1zM7 4h1v1h-1zM3 6h1v1h-1zM5 6h1v1h-1zM7 6h1v1h-1zM3 8h1v1h-1zM5 8h1v1h-1zM7 8h1v1h-1z" fill="#fff"/><path d="M13 4 L20 4 L16.5 8 Z" fill="#34507e"/></svg>
<div style="left:870px;top:304px;width:1031px;height:660px;overflow:hidden">
<div style="left:0px;top:0px;width:1100px;height:1px;background:#9cc4ec"></div>
<div style="left:0px;top:1px;width:1100px;height:24px;background:#f0f0f0"></div>
<div style="left:0px;top:1px;width:49px;height:24px;background:#f5e4ee"></div>
<div style="left:0px;top:26px;width:1100px;height:24px;background:#bdf0ee"></div>
<div style="left:0px;top:26px;width:49px;height:24px;background:#f0f0f0"></div>
<div style="left:0px;top:51px;width:1100px;height:24px;background:#fdeefd"></div>
<div style="left:0px;top:51px;width:49px;height:24px;background:#f0f0f0"></div>
<div style="left:0px;top:76px;width:1100px;height:24px;background:#fdeefd"></div>
<div style="left:0px;top:76px;width:49px;height:24px;background:#f0f0f0"></div>
<div style="left:0px;top:101px;width:1100px;height:24px;background:#fdeefd"></div>
<div style="left:0px;top:101px;width:49px;height:24px;background:#f0f0f0"></div>
<div style="left:0px;top:126px;width:1100px;height:24px;background:#fdeefd"></div>
<div style="left:0px;top:126px;width:49px;height:24px;background:#f0f0f0"></div>
<div style="left:0px;top:151px;width:1100px;height:24px;background:#fdeefd"></div>
<div style="left:0px;top:151px;width:49px;height:24px;background:#f0f0f0"></div>
<div style="left:0px;top:176px;width:1100px;height:24px;background:#fdeefd"></div>
<div style="left:0px;top:176px;width:49px;height:24px;background:#f0f0f0"></div>
<div style="left:0px;top:201px;width:1100px;height:24px;background:#fdeefd"></div>
<div style="left:0px;top:201px;width:49px;height:24px;background:#f0f0f0"></div>
<div style="left:0px;top:226px;width:1100px;height:24px;background:#fdeefd"></div>
<div style="left:0px;top:226px;width:49px;height:24px;background:#f0f0f0"></div>
<div style="left:0px;top:251px;width:1100px;height:24px;background:#fdeefd"></div>
<div style="left:0px;top:251px;width:49px;height:24px;background:#f0f0f0"></div>
<div style="left:0px;top:276px;width:1100px;height:24px;background:#fdeefd"></div>
<div style="left:0px;top:276px;width:49px;height:24px;background:#f0f0f0"></div>
<div style="left:0px;top:301px;width:1100px;height:24px;background:#fdeefd"></div>
<div style="left:0px;top:301px;width:49px;height:24px;background:#f0f0f0"></div>
<div style="left:0px;top:326px;width:1100px;height:24px;background:#fdeefd"></div>
<div style="left:0px;top:326px;width:49px;height:24px;background:#f0f0f0"></div>
<div style="left:0px;top:351px;width:1100px;height:24px;background:#fdeefd"></div>
<div style="left:0px;top:351px;width:49px;height:24px;background:#f0f0f0"></div>
<div style="left:0px;top:376px;width:1100px;height:24px;background:#fdeefd"></div>
<div style="left:0px;top:376px;width:49px;height:24px;background:#f0f0f0"></div>
<div style="left:0px;top:401px;width:1100px;height:24px;background:#fdeefd"></div>
<div style="left:0px;top:401px;width:49px;height:24px;background:#f0f0f0"></div>
<div style="left:0px;top:426px;width:1100px;height:24px;background:#fdeefd"></div>
<div style="left:0px;top:426px;width:49px;height:24px;background:#f0f0f0"></div>
<div style="left:0px;top:451px;width:1100px;height:24px;background:#fdeefd"></div>
<div style="left:0px;top:451px;width:49px;height:24px;background:#f0f0f0"></div>
<div style="left:0px;top:476px;width:1100px;height:24px;background:#fdeefd"></div>
<div style="left:0px;top:476px;width:49px;height:24px;background:#f0f0f0"></div>
<div style="left:0px;top:501px;width:1100px;height:24px;background:#fdeefd"></div>
<div style="left:0px;top:501px;width:49px;height:24px;background:#f0f0f0"></div>
<div style="left:0px;top:526px;width:1100px;height:24px;background:#fdeefd"></div>
<div style="left:0px;top:526px;width:49px;height:24px;background:#f0f0f0"></div>
<div style="left:0px;top:619px;width:1100px;height:24px;background:#fff"></div>
<div style="left:0px;top:619px;width:49px;height:24px;background:#f5e4ee"></div>
<div style="left:0px;top:1px;width:1100px;height:1px;background:#a3c9a0"></div>
<div style="left:0px;top:25px;width:1100px;height:1px;background:#a3c9a0"></div>
<div style="left:0px;top:50px;width:1100px;height:1px;background:#a3c9a0"></div>
<div style="left:0px;top:75px;width:1100px;height:1px;background:#a3c9a0"></div>
<div style="left:0px;top:100px;width:1100px;height:1px;background:#a3c9a0"></div>
<div style="left:0px;top:125px;width:1100px;height:1px;background:#a3c9a0"></div>
<div style="left:0px;top:150px;width:1100px;height:1px;background:#a3c9a0"></div>
<div style="left:0px;top:175px;width:1100px;height:1px;background:#a3c9a0"></div>
<div style="left:0px;top:200px;width:1100px;height:1px;background:#a3c9a0"></div>
<div style="left:0px;top:225px;width:1100px;height:1px;background:#a3c9a0"></div>
<div style="left:0px;top:250px;width:1100px;height:1px;background:#a3c9a0"></div>
<div style="left:0px;top:275px;width:1100px;height:1px;background:#a3c9a0"></div>
<div style="left:0px;top:300px;width:1100px;height:1px;background:#a3c9a0"></div>
<div style="left:0px;top:325px;width:1100px;height:1px;background:#a3c9a0"></div>
<div style="left:0px;top:350px;width:1100px;height:1px;background:#a3c9a0"></div>
<div style="left:0px;top:375px;width:1100px;height:1px;background:#a3c9a0"></div>
<div style="left:0px;top:400px;width:1100px;height:1px;background:#a3c9a0"></div>
<div style="left:0px;top:425px;width:1100px;height:1px;background:#a3c9a0"></div>
<div style="left:0px;top:450px;width:1100px;height:1px;background:#a3c9a0"></div>
<div style="left:0px;top:475px;width:1100px;height:1px;background:#a3c9a0"></div>
<div style="left:0px;top:500px;width:1100px;height:1px;background:#a3c9a0"></div>
<div style="left:0px;top:525px;width:1100px;height:1px;background:#a3c9a0"></div>
<div style="left:0px;top:550px;width:1100px;height:1px;background:#a3c9a0"></div>
<div style="left:0px;top:619px;width:1100px;height:1px;background:#a3c9a0"></div>
<div style="left:0px;top:643px;width:1100px;height:1px;background:#a3c9a0"></div>
<div style="left:0px;top:1px;width:1px;height:549px;background:#a3c9a0"></div>
<div style="left:0px;top:619px;width:1px;height:25px;background:#a3c9a0"></div>
<div style="left:49px;top:1px;width:1px;height:549px;background:#a3c9a0"></div>
<div style="left:49px;top:619px;width:1px;height:25px;background:#a3c9a0"></div>
<div style="left:129px;top:1px;width:1px;height:549px;background:#a3c9a0"></div>
<div style="left:129px;top:619px;width:1px;height:25px;background:#a3c9a0"></div>
<div style="left:209px;top:1px;width:1px;height:549px;background:#a3c9a0"></div>
<div style="left:209px;top:619px;width:1px;height:25px;background:#a3c9a0"></div>
<div style="left:289px;top:1px;width:1px;height:549px;background:#a3c9a0"></div>
<div style="left:289px;top:619px;width:1px;height:25px;background:#a3c9a0"></div>
<div style="left:369px;top:1px;width:1px;height:549px;background:#a3c9a0"></div>
<div style="left:369px;top:619px;width:1px;height:25px;background:#a3c9a0"></div>
<div style="left:439px;top:1px;width:1px;height:549px;background:#a3c9a0"></div>
<div style="left:439px;top:619px;width:1px;height:25px;background:#a3c9a0"></div>
<div style="left:539px;top:1px;width:1px;height:549px;background:#a3c9a0"></div>
<div style="left:539px;top:619px;width:1px;height:25px;background:#a3c9a0"></div>
<div style="left:719px;top:1px;width:1px;height:549px;background:#a3c9a0"></div>
<div style="left:719px;top:619px;width:1px;height:25px;background:#a3c9a0"></div>
<div style="left:789px;top:1px;width:1px;height:549px;background:#a3c9a0"></div>
<div style="left:789px;top:619px;width:1px;height:25px;background:#a3c9a0"></div>
<div style="left:859px;top:1px;width:1px;height:549px;background:#a3c9a0"></div>
<div style="left:859px;top:619px;width:1px;height:25px;background:#a3c9a0"></div>
<div style="left:929px;top:1px;width:1px;height:549px;background:#a3c9a0"></div>
<div style="left:929px;top:619px;width:1px;height:25px;background:#a3c9a0"></div>
<div style="left:1013px;top:1px;width:1px;height:549px;background:#a3c9a0"></div>
<div style="left:1013px;top:619px;width:1px;height:25px;background:#a3c9a0"></div>
<div style="left:0px;top:644px;width:1100px;height:3px;background:#f0f0f0"></div>
<div style="left:0px;top:647px;width:1100px;height:1px;background:#fafafa"></div>
</div>
<div class="t" style="left:870px;width:49px;text-align:center;top:309px;color:#10148c">−</div>
<div class="t" style="left:919px;width:80px;text-align:center;top:309px;color:#10148c">联系人</div>
<div class="t" style="left:999px;width:80px;text-align:center;top:309px;color:#10148c">联系电话</div>
<div class="t" style="left:1079px;width:80px;text-align:center;top:309px;color:#10148c">传真号码</div>
<div class="t" style="left:1159px;width:80px;text-align:center;top:309px;color:#10148c">交付地址</div>
<div class="t" style="left:1239px;width:70px;text-align:center;top:309px;color:#10148c">结算方式</div>
<div class="t" style="left:1309px;width:100px;text-align:center;top:309px;color:#10148c">产品编号</div>
<div class="t" style="left:1409px;width:180px;text-align:center;top:309px;color:#10148c">产品名称</div>
<div class="t" style="left:1589px;width:70px;text-align:center;top:309px;color:#10148c">基准单位</div>
<div class="t" style="left:1659px;width:70px;text-align:center;top:309px;color:#10148c">标准数量</div>
<div class="t" style="left:1729px;width:70px;text-align:center;top:309px;color:#10148c">单价</div>
<div class="t" style="left:1799px;width:84px;text-align:center;top:309px;color:#10148c">批次编号</div>
<div class="t" style="left:1899px;top:309px;color:#10148c"><div style="left:0;top:0;width:2px;height:16px;overflow:hidden">产</div></div>
<div class="t" style="left:870px;width:49px;text-align:center;top:334px;color:#10148c;font-size:11px">1</div>
<div class="t" style="left:924px;top:334px;">无</div>
<div class="t" style="left:1314px;top:334px;"><span class=m>taishiji_g</span></div>
<div class="t" style="left:1414px;top:334px;">家用<span class=m>G</span>型电脑<span class=m>-</span>金奥<span class=m>-onlyit</span></div>
<div class="t" style="left:1594px;top:334px;">个</div>
<div class="t" style="right:186px;top:334px;"><span class=m>50</span></div>
<div class="t" style="right:116px;top:334px;"><span class=m>7324.9</span></div>
<div class="t" style="left:1804px;top:334px;"><span class=m>-</span></div>
<div class="t" style="left:870px;width:49px;text-align:center;top:359px;color:#10148c;font-size:11px">2</div>
<div class="t" style="left:924px;top:359px;">无</div>
<div class="t" style="left:1314px;top:359px;"><span class=m>bijiben_a</span></div>
<div class="t" style="left:1414px;top:359px;"><span class=m>I</span>型笔记本电脑<span class=m>-IBM&nbsp;T42</span></div>
<div class="t" style="left:1594px;top:359px;">个</div>
<div class="t" style="right:186px;top:359px;"><span class=m>1</span></div>
<div class="t" style="right:116px;top:359px;"><span class=m>17380</span></div>
<div class="t" style="left:1804px;top:359px;"><span class=m>A000000439</span></div>
<div class="t" style="left:870px;width:49px;text-align:center;top:384px;color:#10148c;font-size:11px">3</div>
<div class="t" style="left:924px;top:384px;">无</div>
<div class="t" style="left:1314px;top:384px;"><span class=m>bijiben_a</span></div>
<div class="t" style="left:1414px;top:384px;"><span class=m>I</span>型笔记本电脑<span class=m>-IBM&nbsp;T42</span></div>
<div class="t" style="left:1594px;top:384px;">个</div>
<div class="t" style="right:186px;top:384px;"><span class=m>1</span></div>
<div class="t" style="right:116px;top:384px;"><span class=m>17380</span></div>
<div class="t" style="left:1804px;top:384px;"><span class=m>A000000440</span></div>
<div class="t" style="left:870px;width:49px;text-align:center;top:409px;color:#10148c;font-size:11px">4</div>
<div class="t" style="left:924px;top:409px;">无</div>
<div class="t" style="left:1314px;top:409px;"><span class=m>bijiben_a</span></div>
<div class="t" style="left:1414px;top:409px;"><span class=m>I</span>型笔记本电脑<span class=m>-IBM&nbsp;T42</span></div>
<div class="t" style="left:1594px;top:409px;">个</div>
<div class="t" style="right:186px;top:409px;"><span class=m>1</span></div>
<div class="t" style="right:116px;top:409px;"><span class=m>17380</span></div>
<div class="t" style="left:1804px;top:409px;"><span class=m>A000000441</span></div>
<div class="t" style="left:870px;width:49px;text-align:center;top:434px;color:#10148c;font-size:11px">5</div>
<div class="t" style="left:924px;top:434px;">无</div>
<div class="t" style="left:1314px;top:434px;"><span class=m>bijiben_a</span></div>
<div class="t" style="left:1414px;top:434px;"><span class=m>I</span>型笔记本电脑<span class=m>-IBM&nbsp;T42</span></div>
<div class="t" style="left:1594px;top:434px;">个</div>
<div class="t" style="right:186px;top:434px;"><span class=m>1</span></div>
<div class="t" style="right:116px;top:434px;"><span class=m>17380</span></div>
<div class="t" style="left:1804px;top:434px;"><span class=m>A000000442</span></div>
<div class="t" style="left:870px;width:49px;text-align:center;top:459px;color:#10148c;font-size:11px">6</div>
<div class="t" style="left:924px;top:459px;">无</div>
<div class="t" style="left:1314px;top:459px;"><span class=m>bijiben_a</span></div>
<div class="t" style="left:1414px;top:459px;"><span class=m>I</span>型笔记本电脑<span class=m>-IBM&nbsp;T42</span></div>
<div class="t" style="left:1594px;top:459px;">个</div>
<div class="t" style="right:186px;top:459px;"><span class=m>1</span></div>
<div class="t" style="right:116px;top:459px;"><span class=m>17380</span></div>
<div class="t" style="left:1804px;top:459px;"><span class=m>A000000443</span></div>
<div class="t" style="left:870px;width:49px;text-align:center;top:484px;color:#10148c;font-size:11px">7</div>
<div class="t" style="left:924px;top:484px;">无</div>
<div class="t" style="left:1314px;top:484px;"><span class=m>bijiben_a</span></div>
<div class="t" style="left:1414px;top:484px;"><span class=m>I</span>型笔记本电脑<span class=m>-IBM&nbsp;T42</span></div>
<div class="t" style="left:1594px;top:484px;">个</div>
<div class="t" style="right:186px;top:484px;"><span class=m>1</span></div>
<div class="t" style="right:116px;top:484px;"><span class=m>17380</span></div>
<div class="t" style="left:1804px;top:484px;"><span class=m>A000000444</span></div>
<div class="t" style="left:870px;width:49px;text-align:center;top:509px;color:#10148c;font-size:11px">8</div>
<div class="t" style="left:924px;top:509px;">无</div>
<div class="t" style="left:1314px;top:509px;"><span class=m>bijiben_a</span></div>
<div class="t" style="left:1414px;top:509px;"><span class=m>I</span>型笔记本电脑<span class=m>-IBM&nbsp;T42</span></div>
<div class="t" style="left:1594px;top:509px;">个</div>
<div class="t" style="right:186px;top:509px;"><span class=m>1</span></div>
<div class="t" style="right:116px;top:509px;"><span class=m>17380</span></div>
<div class="t" style="left:1804px;top:509px;"><span class=m>A000000445</span></div>
<div class="t" style="left:870px;width:49px;text-align:center;top:534px;color:#10148c;font-size:11px">9</div>
<div class="t" style="left:924px;top:534px;">无</div>
<div class="t" style="left:1314px;top:534px;"><span class=m>bijiben_a</span></div>
<div class="t" style="left:1414px;top:534px;"><span class=m>I</span>型笔记本电脑<span class=m>-IBM&nbsp;T42</span></div>
<div class="t" style="left:1594px;top:534px;">个</div>
<div class="t" style="right:186px;top:534px;"><span class=m>1</span></div>
<div class="t" style="right:116px;top:534px;"><span class=m>17380</span></div>
<div class="t" style="left:1804px;top:534px;"><span class=m>A000000446</span></div>
<div class="t" style="left:870px;width:49px;text-align:center;top:559px;color:#10148c;font-size:11px">10</div>
<div class="t" style="left:924px;top:559px;">无</div>
<div class="t" style="left:1314px;top:559px;"><span class=m>bijiben_a</span></div>
<div class="t" style="left:1414px;top:559px;"><span class=m>I</span>型笔记本电脑<span class=m>-IBM&nbsp;T42</span></div>
<div class="t" style="left:1594px;top:559px;">个</div>
<div class="t" style="right:186px;top:559px;"><span class=m>1</span></div>
<div class="t" style="right:116px;top:559px;"><span class=m>17380</span></div>
<div class="t" style="left:1804px;top:559px;"><span class=m>A000000447</span></div>
<div class="t" style="left:870px;width:49px;text-align:center;top:584px;color:#10148c;font-size:11px">11</div>
<div class="t" style="left:924px;top:584px;">无</div>
<div class="t" style="left:1314px;top:584px;"><span class=m>bijiben_a</span></div>
<div class="t" style="left:1414px;top:584px;"><span class=m>I</span>型笔记本电脑<span class=m>-IBM&nbsp;T42</span></div>
<div class="t" style="left:1594px;top:584px;">个</div>
<div class="t" style="right:186px;top:584px;"><span class=m>1</span></div>
<div class="t" style="right:116px;top:584px;"><span class=m>17380</span></div>
<div class="t" style="left:1804px;top:584px;"><span class=m>A000000448</span></div>
<div class="t" style="left:870px;width:49px;text-align:center;top:609px;color:#10148c;font-size:11px">12</div>
<div class="t" style="left:924px;top:609px;">无</div>
<div class="t" style="left:1314px;top:609px;"><span class=m>bijiben_a</span></div>
<div class="t" style="left:1594px;top:609px;">个</div>
<div class="t" style="right:186px;top:609px;"><span class=m>1</span></div>
<div class="t" style="right:116px;top:609px;"><span class=m>17380</span></div>
<div class="t" style="left:1804px;top:609px;"><span class=m>A000000449</span></div>
<div class="t" style="left:870px;width:49px;text-align:center;top:634px;color:#10148c;font-size:11px">13</div>
<div class="t" style="left:924px;top:634px;">无</div>
<div class="t" style="left:1314px;top:634px;"><span class=m>bijiben_a</span></div>
<div class="t" style="left:1414px;top:634px;"><span class=m>I</span>型笔记本电脑<span class=m>-IBM&nbsp;T42</span></div>
<div class="t" style="left:1594px;top:634px;">个</div>
<div class="t" style="right:186px;top:634px;"><span class=m>1</span></div>
<div class="t" style="right:116px;top:634px;"><span class=m>17380</span></div>
<div class="t" style="left:1804px;top:634px;"><span class=m>A000000450</span></div>
<div class="t" style="left:870px;width:49px;text-align:center;top:659px;color:#10148c;font-size:11px">14</div>
<div class="t" style="left:924px;top:659px;">无</div>
<div class="t" style="left:1314px;top:659px;"><span class=m>bijiben_a</span></div>
<div class="t" style="left:1414px;top:659px;"><span class=m>I</span>型笔记本电脑<span class=m>-IBM&nbsp;T42</span></div>
<div class="t" style="left:1594px;top:659px;">个</div>
<div class="t" style="right:186px;top:659px;"><span class=m>1</span></div>
<div class="t" style="right:116px;top:659px;"><span class=m>17380</span></div>
<div class="t" style="left:1804px;top:659px;"><span class=m>A000000451</span></div>
<div class="t" style="left:870px;width:49px;text-align:center;top:684px;color:#10148c;font-size:11px">15</div>
<div class="t" style="left:924px;top:684px;">无</div>
<div class="t" style="left:1314px;top:684px;"><span class=m>bijiben_a</span></div>
<div class="t" style="left:1414px;top:684px;"><span class=m>I</span>型笔记本电脑<span class=m>-IBM&nbsp;T42</span></div>
<div class="t" style="left:1594px;top:684px;">个</div>
<div class="t" style="right:186px;top:684px;"><span class=m>1</span></div>
<div class="t" style="right:116px;top:684px;"><span class=m>17380</span></div>
<div class="t" style="left:1804px;top:684px;"><span class=m>A000000452</span></div>
<div class="t" style="left:870px;width:49px;text-align:center;top:709px;color:#10148c;font-size:11px">16</div>
<div class="t" style="left:924px;top:709px;">无</div>
<div class="t" style="left:1314px;top:709px;"><span class=m>bijiben_a</span></div>
<div class="t" style="left:1414px;top:709px;"><span class=m>I</span>型笔记本电脑<span class=m>-IBM&nbsp;T42</span></div>
<div class="t" style="left:1594px;top:709px;">个</div>
<div class="t" style="right:186px;top:709px;"><span class=m>1</span></div>
<div class="t" style="right:116px;top:709px;"><span class=m>17380</span></div>
<div class="t" style="left:1804px;top:709px;"><span class=m>A000000453</span></div>
<div class="t" style="left:870px;width:49px;text-align:center;top:734px;color:#10148c;font-size:11px">17</div>
<div class="t" style="left:924px;top:734px;">无</div>
<div class="t" style="left:1314px;top:734px;"><span class=m>bijiben_a</span></div>
<div class="t" style="left:1414px;top:734px;"><span class=m>I</span>型笔记本电脑<span class=m>-IBM&nbsp;T42</span></div>
<div class="t" style="left:1594px;top:734px;">个</div>
<div class="t" style="right:186px;top:734px;"><span class=m>1</span></div>
<div class="t" style="right:116px;top:734px;"><span class=m>17380</span></div>
<div class="t" style="left:1804px;top:734px;"><span class=m>A000000454</span></div>
<div class="t" style="left:870px;width:49px;text-align:center;top:759px;color:#10148c;font-size:11px">18</div>
<div class="t" style="left:924px;top:759px;">无</div>
<div class="t" style="left:1314px;top:759px;"><span class=m>bijiben_a</span></div>
<div class="t" style="left:1414px;top:759px;"><span class=m>I</span>型笔记本电脑<span class=m>-IBM&nbsp;T42</span></div>
<div class="t" style="left:1594px;top:759px;">个</div>
<div class="t" style="right:186px;top:759px;"><span class=m>1</span></div>
<div class="t" style="right:116px;top:759px;"><span class=m>17380</span></div>
<div class="t" style="left:1804px;top:759px;"><span class=m>A000000455</span></div>
<div class="t" style="left:870px;width:49px;text-align:center;top:784px;color:#10148c;font-size:11px">19</div>
<div class="t" style="left:924px;top:784px;">无</div>
<div class="t" style="left:1314px;top:784px;"><span class=m>bijiben_a</span></div>
<div class="t" style="left:1414px;top:784px;"><span class=m>I</span>型笔记本电脑<span class=m>-IBM&nbsp;T42</span></div>
<div class="t" style="left:1594px;top:784px;">个</div>
<div class="t" style="right:186px;top:784px;"><span class=m>1</span></div>
<div class="t" style="right:116px;top:784px;"><span class=m>17380</span></div>
<div class="t" style="left:1804px;top:784px;"><span class=m>A000000456</span></div>
<div class="t" style="left:870px;width:49px;text-align:center;top:809px;color:#10148c;font-size:11px">20</div>
<div class="t" style="left:924px;top:809px;">无</div>
<div class="t" style="left:1314px;top:809px;"><span class=m>bijiben_a</span></div>
<div class="t" style="left:1414px;top:809px;"><span class=m>I</span>型笔记本电脑<span class=m>-IBM&nbsp;T42</span></div>
<div class="t" style="left:1594px;top:809px;">个</div>
<div class="t" style="right:186px;top:809px;"><span class=m>1</span></div>
<div class="t" style="right:116px;top:809px;"><span class=m>17380</span></div>
<div class="t" style="left:1804px;top:809px;"><span class=m>A000000457</span></div>
<div class="t" style="left:870px;width:49px;text-align:center;top:834px;color:#10148c;font-size:11px">21</div>
<div class="t" style="left:924px;top:834px;">无</div>
<div class="t" style="left:1314px;top:834px;"><span class=m>bijiben_a</span></div>
<div class="t" style="left:1414px;top:834px;"><span class=m>I</span>型笔记本电脑<span class=m>-IBM&nbsp;T42</span></div>
<div class="t" style="left:1594px;top:834px;">个</div>
<div class="t" style="right:186px;top:834px;"><span class=m>1</span></div>
<div class="t" style="right:116px;top:834px;"><span class=m>17380</span></div>
<div class="t" style="left:1804px;top:834px;"><span class=m>A000000458</span></div>
<div class="t" style="right:186px;top:927px;"><span class=m>70</span></div>
<div style="left:1803px;top:351px;width:98px;height:526px;border:1px solid #f03030"></div>
<div style="left:1852px;top:959px;width:17px;height:2px;background:#808080"></div>
</body></html>
